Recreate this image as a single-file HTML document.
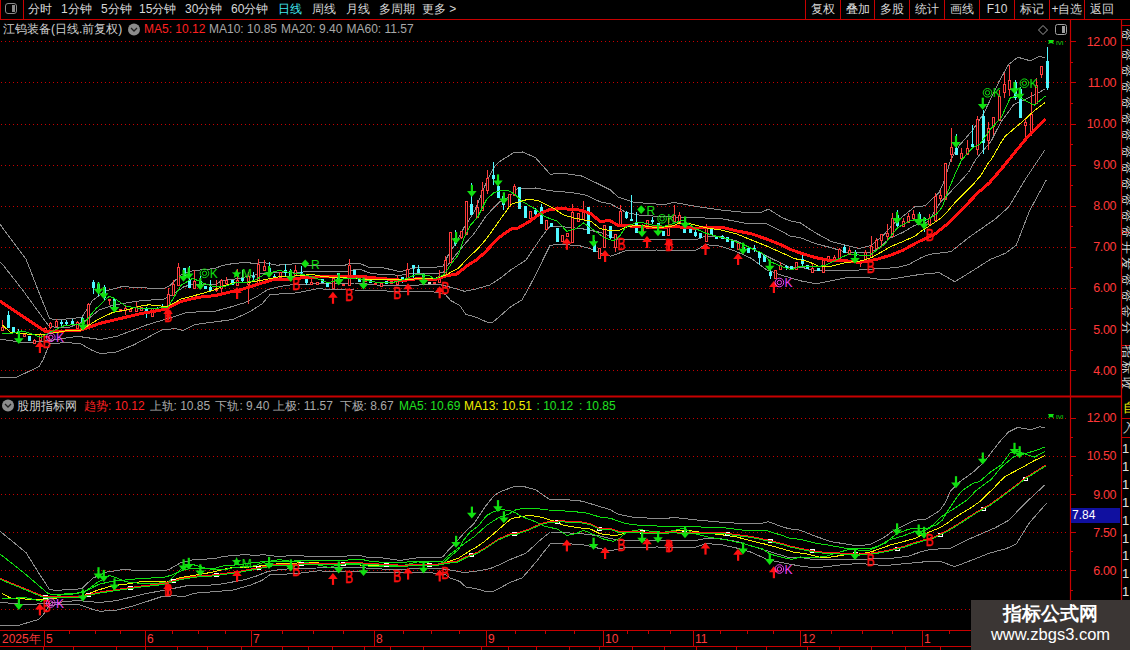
<!DOCTYPE html>
<html><head><meta charset="utf-8"><style>
html,body{margin:0;padding:0;background:#000;width:1130px;height:650px;overflow:hidden;position:relative}
.t{position:absolute;white-space:nowrap;font-family:"Liberation Sans",sans-serif;line-height:15px;font-size:12px}
</style></head><body>
<svg width="1130" height="650" style="position:absolute;left:0;top:0"><line x1="0" y1="19.5" x2="1130" y2="19.5" stroke="#c80000" stroke-width="1"/><line x1="0.5" y1="0" x2="0.5" y2="19" stroke="#c80000"/><line x1="23.5" y1="0" x2="23.5" y2="19" stroke="#c80000"/><line x1="805.5" y1="0" x2="805.5" y2="19" stroke="#c80000"/><line x1="840.5" y1="0" x2="840.5" y2="19" stroke="#c80000"/><line x1="874.5" y1="0" x2="874.5" y2="19" stroke="#c80000"/><line x1="909.5" y1="0" x2="909.5" y2="19" stroke="#c80000"/><line x1="944.5" y1="0" x2="944.5" y2="19" stroke="#c80000"/><line x1="979.5" y1="0" x2="979.5" y2="19" stroke="#c80000"/><line x1="1014.5" y1="0" x2="1014.5" y2="19" stroke="#c80000"/><line x1="1049.5" y1="0" x2="1049.5" y2="19" stroke="#c80000"/><line x1="1084.5" y1="0" x2="1084.5" y2="19" stroke="#c80000"/><rect x="5.5" y="3.5" width="11" height="10" rx="2.5" fill="none" stroke="#8a8a8a" stroke-width="1"/><rect x="12" y="5" width="3" height="7" fill="#8a8a8a"/><line x1="1070.5" y1="19" x2="1070.5" y2="630" stroke="#c80000" stroke-width="1.2"/><line x1="1121.5" y1="19" x2="1121.5" y2="650" stroke="#c80000" stroke-width="1.2"/><line x1="0" y1="396.5" x2="1122" y2="396.5" stroke="#c80000" stroke-width="2"/><line x1="0" y1="630.5" x2="1130" y2="630.5" stroke="#c80000" stroke-width="1.2"/><line x1="0" y1="646.5" x2="1130" y2="646.5" stroke="#c80000" stroke-width="1.2"/><line x1="1" y1="41.5" x2="1068" y2="41.5" stroke="#c80000" stroke-dasharray="1 3"/><line x1="1070" y1="41.5" x2="1076" y2="41.5" stroke="#c80000"/><line x1="1070" y1="62.5" x2="1073" y2="62.5" stroke="#c80000"/><line x1="1" y1="82.5" x2="1068" y2="82.5" stroke="#c80000" stroke-dasharray="1 3"/><line x1="1070" y1="82.5" x2="1076" y2="82.5" stroke="#c80000"/><line x1="1070" y1="103.5" x2="1073" y2="103.5" stroke="#c80000"/><line x1="1" y1="124.5" x2="1068" y2="124.5" stroke="#c80000" stroke-dasharray="1 3"/><line x1="1070" y1="124.5" x2="1076" y2="124.5" stroke="#c80000"/><line x1="1070" y1="144.5" x2="1073" y2="144.5" stroke="#c80000"/><line x1="1" y1="165.5" x2="1068" y2="165.5" stroke="#c80000" stroke-dasharray="1 3"/><line x1="1070" y1="165.5" x2="1076" y2="165.5" stroke="#c80000"/><line x1="1070" y1="185.5" x2="1073" y2="185.5" stroke="#c80000"/><line x1="1" y1="206.5" x2="1068" y2="206.5" stroke="#c80000" stroke-dasharray="1 3"/><line x1="1070" y1="206.5" x2="1076" y2="206.5" stroke="#c80000"/><line x1="1070" y1="226.5" x2="1073" y2="226.5" stroke="#c80000"/><line x1="1" y1="247.5" x2="1068" y2="247.5" stroke="#c80000" stroke-dasharray="1 3"/><line x1="1070" y1="247.5" x2="1076" y2="247.5" stroke="#c80000"/><line x1="1070" y1="267.5" x2="1073" y2="267.5" stroke="#c80000"/><line x1="1" y1="288.5" x2="1068" y2="288.5" stroke="#c80000" stroke-dasharray="1 3"/><line x1="1070" y1="288.5" x2="1076" y2="288.5" stroke="#c80000"/><line x1="1070" y1="308.5" x2="1073" y2="308.5" stroke="#c80000"/><line x1="1" y1="329.5" x2="1068" y2="329.5" stroke="#c80000" stroke-dasharray="1 3"/><line x1="1070" y1="329.5" x2="1076" y2="329.5" stroke="#c80000"/><line x1="1070" y1="350.5" x2="1073" y2="350.5" stroke="#c80000"/><line x1="1" y1="370.5" x2="1068" y2="370.5" stroke="#c80000" stroke-dasharray="1 3"/><line x1="1070" y1="370.5" x2="1076" y2="370.5" stroke="#c80000"/><line x1="1" y1="418.5" x2="1068" y2="418.5" stroke="#c80000" stroke-dasharray="1 3"/><line x1="1070" y1="418.5" x2="1076" y2="418.5" stroke="#c80000"/><line x1="1070" y1="437.5" x2="1073" y2="437.5" stroke="#c80000"/><line x1="1" y1="456.5" x2="1068" y2="456.5" stroke="#c80000" stroke-dasharray="1 3"/><line x1="1070" y1="456.5" x2="1076" y2="456.5" stroke="#c80000"/><line x1="1070" y1="475.5" x2="1073" y2="475.5" stroke="#c80000"/><line x1="1" y1="494.5" x2="1068" y2="494.5" stroke="#c80000" stroke-dasharray="1 3"/><line x1="1070" y1="494.5" x2="1076" y2="494.5" stroke="#c80000"/><line x1="1070" y1="513.5" x2="1073" y2="513.5" stroke="#c80000"/><line x1="1" y1="532.5" x2="1068" y2="532.5" stroke="#c80000" stroke-dasharray="1 3"/><line x1="1070" y1="532.5" x2="1076" y2="532.5" stroke="#c80000"/><line x1="1070" y1="551.5" x2="1073" y2="551.5" stroke="#c80000"/><line x1="1" y1="570.5" x2="1068" y2="570.5" stroke="#c80000" stroke-dasharray="1 3"/><line x1="1070" y1="570.5" x2="1076" y2="570.5" stroke="#c80000"/><line x1="1070" y1="590.5" x2="1073" y2="590.5" stroke="#c80000"/><line x1="1" y1="609.5" x2="1068" y2="609.5" stroke="#c80000" stroke-dasharray="1 3"/><line x1="1070" y1="609.5" x2="1076" y2="609.5" stroke="#c80000"/><line x1="1070" y1="628.5" x2="1073" y2="628.5" stroke="#c80000"/><line x1="44.5" y1="630" x2="44.5" y2="646" stroke="#c80000"/><line x1="145.5" y1="630" x2="145.5" y2="646" stroke="#c80000"/><line x1="251.5" y1="630" x2="251.5" y2="646" stroke="#c80000"/><line x1="374.5" y1="630" x2="374.5" y2="646" stroke="#c80000"/><line x1="486.5" y1="630" x2="486.5" y2="646" stroke="#c80000"/><line x1="603.5" y1="630" x2="603.5" y2="646" stroke="#c80000"/><line x1="693.5" y1="630" x2="693.5" y2="646" stroke="#c80000"/><line x1="800.5" y1="630" x2="800.5" y2="646" stroke="#c80000"/><line x1="922.5" y1="630" x2="922.5" y2="646" stroke="#c80000"/><line x1="69.5" y1="630" x2="69.5" y2="634" stroke="#c80000"/><line x1="95.5" y1="630" x2="95.5" y2="634" stroke="#c80000"/><line x1="120.5" y1="630" x2="120.5" y2="634" stroke="#c80000"/><line x1="172.5" y1="630" x2="172.5" y2="634" stroke="#c80000"/><line x1="198.5" y1="630" x2="198.5" y2="634" stroke="#c80000"/><line x1="225.5" y1="630" x2="225.5" y2="634" stroke="#c80000"/><line x1="282.5" y1="630" x2="282.5" y2="634" stroke="#c80000"/><line x1="313.5" y1="630" x2="313.5" y2="634" stroke="#c80000"/><line x1="343.5" y1="630" x2="343.5" y2="634" stroke="#c80000"/><line x1="403.5" y1="630" x2="403.5" y2="634" stroke="#c80000"/><line x1="431.5" y1="630" x2="431.5" y2="634" stroke="#c80000"/><line x1="459.5" y1="630" x2="459.5" y2="634" stroke="#c80000"/><line x1="515.5" y1="630" x2="515.5" y2="634" stroke="#c80000"/><line x1="545.5" y1="630" x2="545.5" y2="634" stroke="#c80000"/><line x1="574.5" y1="630" x2="574.5" y2="634" stroke="#c80000"/><line x1="627.5" y1="630" x2="627.5" y2="634" stroke="#c80000"/><line x1="648.5" y1="630" x2="648.5" y2="634" stroke="#c80000"/><line x1="670.5" y1="630" x2="670.5" y2="634" stroke="#c80000"/><line x1="720.5" y1="630" x2="720.5" y2="634" stroke="#c80000"/><line x1="747.5" y1="630" x2="747.5" y2="634" stroke="#c80000"/><line x1="773.5" y1="630" x2="773.5" y2="634" stroke="#c80000"/><line x1="831.5" y1="630" x2="831.5" y2="634" stroke="#c80000"/><line x1="862.5" y1="630" x2="862.5" y2="634" stroke="#c80000"/><line x1="892.5" y1="630" x2="892.5" y2="634" stroke="#c80000"/><line x1="949.5" y1="630" x2="949.5" y2="634" stroke="#c80000"/><line x1="980.5" y1="630" x2="980.5" y2="634" stroke="#c80000"/><line x1="1010.5" y1="630" x2="1010.5" y2="634" stroke="#c80000"/><line x1="1040.5" y1="630" x2="1040.5" y2="634" stroke="#c80000"/><line x1="43.5" y1="647" x2="43.5" y2="650" stroke="#c80000"/><line x1="73.5" y1="647" x2="73.5" y2="650" stroke="#c80000"/><line x1="116.5" y1="647" x2="116.5" y2="650" stroke="#c80000"/><line x1="145.5" y1="647" x2="145.5" y2="650" stroke="#c80000"/><line x1="177.5" y1="647" x2="177.5" y2="650" stroke="#c80000"/><line x1="207.5" y1="647" x2="207.5" y2="650" stroke="#c80000"/><line x1="241.5" y1="647" x2="241.5" y2="650" stroke="#c80000"/><line x1="282.5" y1="647" x2="282.5" y2="650" stroke="#c80000"/><line x1="308.5" y1="647" x2="308.5" y2="650" stroke="#c80000"/><line x1="332.5" y1="647" x2="332.5" y2="650" stroke="#c80000"/><line x1="364.5" y1="647" x2="364.5" y2="650" stroke="#c80000"/><line x1="390.5" y1="647" x2="390.5" y2="650" stroke="#c80000"/><line x1="423.5" y1="647" x2="423.5" y2="650" stroke="#c80000"/><line x1="481.5" y1="647" x2="481.5" y2="650" stroke="#c80000"/><line x1="508.5" y1="647" x2="508.5" y2="650" stroke="#c80000"/><line x1="536.5" y1="647" x2="536.5" y2="650" stroke="#c80000"/><line x1="569.5" y1="647" x2="569.5" y2="650" stroke="#c80000"/><line x1="599.5" y1="647" x2="599.5" y2="650" stroke="#c80000"/><line x1="632.5" y1="647" x2="632.5" y2="650" stroke="#c80000"/><line x1="664.5" y1="647" x2="664.5" y2="650" stroke="#c80000"/><line x1="696.5" y1="647" x2="696.5" y2="650" stroke="#c80000"/><line x1="736.5" y1="647" x2="736.5" y2="650" stroke="#c80000"/><line x1="766.5" y1="647" x2="766.5" y2="650" stroke="#c80000"/><line x1="807.5" y1="647" x2="807.5" y2="650" stroke="#c80000"/><line x1="839.5" y1="647" x2="839.5" y2="650" stroke="#c80000"/><line x1="871.5" y1="647" x2="871.5" y2="650" stroke="#c80000"/><line x1="905.5" y1="647" x2="905.5" y2="650" stroke="#c80000"/><line x1="940.5" y1="647" x2="940.5" y2="650" stroke="#c80000"/><line x1="1121" y1="25.5" x2="1130" y2="25.5" stroke="#c80000"/><line x1="1121" y1="45.5" x2="1130" y2="45.5" stroke="#c80000"/><line x1="1121" y1="232.5" x2="1130" y2="232.5" stroke="#c80000"/><line x1="1121" y1="345.5" x2="1130" y2="345.5" stroke="#c80000"/><line x1="1121" y1="418.5" x2="1130" y2="418.5" stroke="#c80000"/><line x1="1121" y1="437.5" x2="1130" y2="437.5" stroke="#c80000"/><circle cx="134" cy="29.5" r="6" fill="#8c8c8c"/><polyline points="131,28 134,31 137,28" fill="none" stroke="#202020" stroke-width="1.3"/><circle cx="8" cy="405.5" r="6" fill="#8c8c8c"/><polyline points="5,404 8,407 11,404" fill="none" stroke="#202020" stroke-width="1.3"/><polygon points="1043,25.5 1047.5,30 1043,34.5 1038.5,30" fill="none" stroke="#a0a0a0"/><rect x="1055.5" y="24.5" width="11" height="10" rx="2" fill="none" stroke="#a0a0a0"/><rect x="1062" y="26" width="3" height="7" fill="#a0a0a0"/><clipPath id="cu"><rect x="0" y="36" width="1069" height="360"/></clipPath><g clip-path="url(#cu)"><polyline points="0.0,224.0 2.6,228.0 26.0,259.0 38.0,290.0 49.5,318.5 56.0,320.0 81.8,317.4 92.3,300.8 105.4,290.8 117.0,288.0 122.3,286.5 135.0,287.5 163.9,288.7 169.6,285.8 181.2,274.8 192.7,270.8 215.0,268.5 221.5,265.8 233.0,263.5 248.0,262.3 253.9,264.0 263.0,262.3 277.0,265.2 298.9,263.5 308.0,265.2 345.0,265.2 349.7,263.5 360.0,263.5 368.0,267.0 383.0,267.7 400.4,271.8 410.8,268.9 417.7,267.5 435.0,267.4 442.9,266.0 448.0,255.6 454.6,245.0 463.8,228.0 474.3,211.7 485.4,184.6 494.0,167.4 498.5,162.2 513.2,153.0 522.5,152.0 535.4,157.5 550.2,174.2 563.0,173.2 581.5,176.0 595.0,182.3 610.4,190.0 618.0,197.0 633.5,202.3 664.2,204.6 673.5,202.3 695.0,206.2 720.8,210.0 743.8,212.3 759.2,213.0 768.5,209.2 782.3,217.7 790.0,220.8 800.4,223.0 815.8,233.0 831.2,241.5 846.5,245.4 858.8,248.5 871.2,245.4 884.2,234.4 892.8,224.5 902.6,216.5 914.9,206.7 920.0,206.4 925.5,205.7 933.9,197.4 939.4,191.9 945.0,179.4 950.5,160.0 959.6,145.1 972.5,130.3 983.6,113.7 999.2,81.2 1008.5,64.6 1017.7,57.2 1030.6,60.9 1039.9,56.2 1045.4,58.1" fill="none" stroke="#8c8c8c" stroke-width="1" shape-rendering="crispEdges"/><polyline points="0.0,262.0 2.6,264.5 22.6,290.0 48.4,325.5 53.8,327.0 70.0,327.0 87.0,320.0 99.0,310.0 112.3,305.4 126.0,303.0 140.0,300.8 163.9,299.0 173.0,294.5 183.5,287.0 192.7,284.0 215.0,284.6 221.5,280.8 238.9,278.5 251.6,275.6 267.7,272.7 290.0,273.0 308.0,271.6 345.0,271.6 354.3,269.8 360.0,269.4 371.5,273.5 383.0,274.6 400.4,275.2 412.0,273.5 435.0,273.9 442.9,272.6 448.0,264.7 457.3,253.0 465.0,243.8 474.3,233.3 486.6,215.3 498.9,202.4 508.7,197.0 517.0,189.0 535.4,188.0 550.2,190.8 572.3,192.6 587.0,195.4 600.0,201.8 610.4,203.8 625.8,212.3 641.2,215.4 671.9,217.0 695.0,217.7 720.8,218.5 743.8,223.0 766.9,223.8 782.3,231.5 790.0,236.2 800.4,237.7 815.8,243.8 831.2,247.7 846.5,252.3 858.8,253.0 871.2,252.0 878.0,248.5 890.3,238.0 902.6,232.5 914.9,225.1 924.7,223.9 930.0,219.0 940.8,201.6 954.6,187.7 968.5,172.5 975.4,160.0 979.9,154.3 991.0,141.4 1001.0,121.8 1014.0,104.3 1027.0,98.7 1038.0,93.2 1045.4,88.6" fill="none" stroke="#8c8c8c" stroke-width="1" shape-rendering="crispEdges"/><polyline points="0.0,339.0 2.6,339.5 26.0,343.0 49.5,340.6 77.5,336.3 100.0,339.5 117.0,336.3 146.5,325.0 169.6,318.0 187.0,312.4 215.0,311.2 227.3,308.0 244.6,302.7 256.2,297.0 267.7,289.5 279.3,286.6 290.0,285.0 308.0,284.3 331.2,283.0 354.3,283.0 360.0,283.3 383.0,285.6 406.2,285.6 429.3,284.5 441.5,285.0 450.7,287.3 464.5,291.3 476.0,289.0 489.8,285.0 501.3,277.5 510.6,270.0 526.0,260.0 541.0,237.8 550.2,225.8 563.0,226.8 581.5,228.6 600.0,232.3 618.0,239.2 671.9,239.2 695.0,240.0 705.4,236.2 720.8,237.0 736.2,240.8 751.5,248.5 766.9,256.2 782.3,263.8 790.0,267.7 800.4,267.0 815.8,270.8 846.5,270.8 871.2,269.2 896.5,267.6 908.8,264.5 921.0,257.7 930.0,254.2 951.0,251.6 969.2,237.2 995.4,218.9 1008.5,207.2 1026.8,177.0 1045.1,149.6" fill="none" stroke="#8c8c8c" stroke-width="1" shape-rendering="crispEdges"/><polyline points="0.0,377.0 17.0,377.0 39.0,366.6 43.0,360.0 49.5,343.8 64.6,342.7 79.7,343.3 91.5,350.0 100.0,353.5 115.3,352.4 134.0,344.8 162.7,329.5 176.2,328.7 183.0,330.4 195.0,324.5 233.0,319.5 250.4,311.4 262.0,303.9 270.0,294.7 279.3,294.0 296.5,292.9 319.6,288.3 325.4,289.5 354.3,290.0 377.3,290.8 406.2,291.4 430.0,291.3 445.0,294.2 450.7,300.5 460.0,305.7 465.7,314.3 476.0,317.2 487.5,322.4 492.7,322.4 510.6,306.8 522.0,300.0 529.0,287.3 538.2,270.0 542.8,260.0 550.2,245.2 563.0,244.3 581.5,246.1 590.8,249.0 600.0,252.6 610.4,256.2 625.8,250.8 656.5,250.0 695.0,250.8 705.4,244.6 720.8,246.2 736.2,251.5 751.5,258.5 766.9,270.0 782.3,275.4 800.4,280.8 815.8,283.8 831.2,280.8 846.5,277.7 861.9,277.0 885.0,280.0 921.0,274.3 939.2,272.6 954.8,281.7 971.9,271.2 990.2,259.5 1005.9,253.0 1016.3,245.1 1029.4,211.1 1046.4,179.7" fill="none" stroke="#8c8c8c" stroke-width="1" shape-rendering="crispEdges"/><line x1="2.5" y1="320" x2="2.5" y2="327" stroke="#ff3c3c"/><line x1="2.5" y1="330" x2="2.5" y2="330" stroke="#ff3c3c"/><rect x="1.5" y="327.5" width="2" height="3" fill="#000" stroke="#ff3c3c" stroke-width="1"/><line x1="8.5" y1="311" x2="8.5" y2="328" stroke="#50f8ff"/><rect x="7" y="315" width="3" height="13" fill="#50f8ff"/><line x1="13.5" y1="327" x2="13.5" y2="332" stroke="#50f8ff"/><rect x="12" y="327" width="3" height="5" fill="#50f8ff"/><line x1="18.5" y1="329" x2="18.5" y2="334" stroke="#50f8ff"/><rect x="17" y="331" width="3" height="2" fill="#50f8ff"/><line x1="24.5" y1="333" x2="24.5" y2="334" stroke="#ff3c3c"/><line x1="24.5" y1="336" x2="24.5" y2="336" stroke="#ff3c3c"/><rect x="23.5" y="334.5" width="2" height="2" fill="#000" stroke="#ff3c3c" stroke-width="1"/><line x1="29.5" y1="336" x2="29.5" y2="341" stroke="#50f8ff"/><rect x="28" y="336" width="3" height="5" fill="#50f8ff"/><line x1="34.5" y1="339" x2="34.5" y2="340" stroke="#ff3c3c"/><line x1="34.5" y1="343" x2="34.5" y2="344" stroke="#ff3c3c"/><rect x="33.5" y="340.5" width="2" height="3" fill="#000" stroke="#ff3c3c" stroke-width="1"/><line x1="40.5" y1="333" x2="40.5" y2="334" stroke="#ff3c3c"/><line x1="40.5" y1="340" x2="40.5" y2="340" stroke="#ff3c3c"/><rect x="39.5" y="334.5" width="2" height="6" fill="#000" stroke="#ff3c3c" stroke-width="1"/><line x1="45.5" y1="327" x2="45.5" y2="328" stroke="#ff3c3c"/><line x1="45.5" y1="332" x2="45.5" y2="332" stroke="#ff3c3c"/><rect x="44.5" y="328.5" width="2" height="4" fill="#000" stroke="#ff3c3c" stroke-width="1"/><line x1="50.5" y1="322" x2="50.5" y2="323" stroke="#ff3c3c"/><line x1="50.5" y1="327" x2="50.5" y2="329" stroke="#ff3c3c"/><rect x="49.5" y="323.5" width="2" height="4" fill="#000" stroke="#ff3c3c" stroke-width="1"/><line x1="56.5" y1="319" x2="56.5" y2="321" stroke="#ff3c3c"/><line x1="56.5" y1="326" x2="56.5" y2="326" stroke="#ff3c3c"/><rect x="55.5" y="321.5" width="2" height="5" fill="#000" stroke="#ff3c3c" stroke-width="1"/><line x1="61.5" y1="320" x2="61.5" y2="326" stroke="#50f8ff"/><rect x="60" y="322" width="3" height="2" fill="#50f8ff"/><line x1="66.5" y1="320" x2="66.5" y2="326" stroke="#50f8ff"/><rect x="65" y="322" width="3" height="2" fill="#50f8ff"/><line x1="72.5" y1="319" x2="72.5" y2="325" stroke="#50f8ff"/><rect x="71" y="321" width="3" height="3" fill="#50f8ff"/><line x1="77.5" y1="321" x2="77.5" y2="322" stroke="#ff3c3c"/><line x1="77.5" y1="328" x2="77.5" y2="328" stroke="#ff3c3c"/><rect x="76.5" y="322.5" width="2" height="6" fill="#000" stroke="#ff3c3c" stroke-width="1"/><line x1="82.5" y1="317" x2="82.5" y2="323" stroke="#50f8ff"/><rect x="81" y="318" width="3" height="4" fill="#50f8ff"/><line x1="88.5" y1="303" x2="88.5" y2="304" stroke="#ff3c3c"/><line x1="88.5" y1="324" x2="88.5" y2="325" stroke="#ff3c3c"/><rect x="87.5" y="304.5" width="2" height="20" fill="#000" stroke="#ff3c3c" stroke-width="1"/><line x1="93.5" y1="280" x2="93.5" y2="294" stroke="#50f8ff"/><rect x="92" y="282" width="3" height="6" fill="#50f8ff"/><line x1="98.5" y1="282" x2="98.5" y2="296" stroke="#50f8ff"/><rect x="97" y="284" width="3" height="8" fill="#50f8ff"/><line x1="104.5" y1="285" x2="104.5" y2="301" stroke="#50f8ff"/><rect x="103" y="287" width="3" height="11" fill="#50f8ff"/><line x1="109.5" y1="299" x2="109.5" y2="299" stroke="#ff3c3c"/><line x1="109.5" y1="300" x2="109.5" y2="305" stroke="#ff3c3c"/><rect x="108.5" y="299.5" width="2" height="1" fill="#000" stroke="#ff3c3c" stroke-width="1"/><line x1="114.5" y1="299" x2="114.5" y2="307" stroke="#50f8ff"/><rect x="113" y="299" width="3" height="8" fill="#50f8ff"/><line x1="120.5" y1="309" x2="120.5" y2="309" stroke="#ff3c3c"/><line x1="120.5" y1="311" x2="120.5" y2="311" stroke="#ff3c3c"/><rect x="119.5" y="309.5" width="2" height="2" fill="#000" stroke="#ff3c3c" stroke-width="1"/><line x1="125.5" y1="306" x2="125.5" y2="308" stroke="#ff3c3c"/><line x1="125.5" y1="310" x2="125.5" y2="315" stroke="#ff3c3c"/><rect x="124.5" y="308.5" width="2" height="2" fill="#000" stroke="#ff3c3c" stroke-width="1"/><line x1="130.5" y1="309" x2="130.5" y2="309" stroke="#ff3c3c"/><line x1="130.5" y1="311" x2="130.5" y2="311" stroke="#ff3c3c"/><rect x="129.5" y="309.5" width="2" height="2" fill="#000" stroke="#ff3c3c" stroke-width="1"/><line x1="136.5" y1="302" x2="136.5" y2="307" stroke="#ff3c3c"/><line x1="136.5" y1="311" x2="136.5" y2="311" stroke="#ff3c3c"/><rect x="135.5" y="307.5" width="2" height="4" fill="#000" stroke="#ff3c3c" stroke-width="1"/><line x1="141.5" y1="307" x2="141.5" y2="307" stroke="#ff3c3c"/><line x1="141.5" y1="310" x2="141.5" y2="310" stroke="#ff3c3c"/><rect x="140.5" y="307.5" width="2" height="3" fill="#000" stroke="#ff3c3c" stroke-width="1"/><line x1="146.5" y1="307" x2="146.5" y2="318" stroke="#50f8ff"/><rect x="145" y="308" width="3" height="4" fill="#50f8ff"/><line x1="152.5" y1="308" x2="152.5" y2="308" stroke="#ff3c3c"/><line x1="152.5" y1="316" x2="152.5" y2="316" stroke="#ff3c3c"/><rect x="151.5" y="308.5" width="2" height="8" fill="#000" stroke="#ff3c3c" stroke-width="1"/><line x1="157.5" y1="307" x2="157.5" y2="312" stroke="#50f8ff"/><rect x="156" y="308" width="3" height="3" fill="#50f8ff"/><line x1="162.5" y1="304" x2="162.5" y2="311" stroke="#50f8ff"/><rect x="161" y="307" width="3" height="4" fill="#50f8ff"/><line x1="168.5" y1="288" x2="168.5" y2="294" stroke="#ff3c3c"/><line x1="168.5" y1="307" x2="168.5" y2="307" stroke="#ff3c3c"/><rect x="167.5" y="294.5" width="2" height="13" fill="#000" stroke="#ff3c3c" stroke-width="1"/><line x1="173.5" y1="280" x2="173.5" y2="284" stroke="#ff3c3c"/><line x1="173.5" y1="295" x2="173.5" y2="295" stroke="#ff3c3c"/><rect x="172.5" y="284.5" width="2" height="11" fill="#000" stroke="#ff3c3c" stroke-width="1"/><line x1="178.5" y1="263" x2="178.5" y2="267" stroke="#ff3c3c"/><line x1="178.5" y1="285" x2="178.5" y2="285" stroke="#ff3c3c"/><rect x="177.5" y="267.5" width="2" height="18" fill="#000" stroke="#ff3c3c" stroke-width="1"/><line x1="184.5" y1="268" x2="184.5" y2="277" stroke="#50f8ff"/><rect x="183" y="268" width="3" height="8" fill="#50f8ff"/><line x1="189.5" y1="266" x2="189.5" y2="288" stroke="#50f8ff"/><rect x="188" y="280" width="3" height="8" fill="#50f8ff"/><line x1="194.5" y1="270" x2="194.5" y2="281" stroke="#ff3c3c"/><line x1="194.5" y1="288" x2="194.5" y2="288" stroke="#ff3c3c"/><rect x="193.5" y="281.5" width="2" height="7" fill="#000" stroke="#ff3c3c" stroke-width="1"/><line x1="200.5" y1="276" x2="200.5" y2="288" stroke="#50f8ff"/><rect x="199" y="281" width="3" height="5" fill="#50f8ff"/><line x1="205.5" y1="286" x2="205.5" y2="289" stroke="#50f8ff"/><rect x="204" y="286" width="3" height="3" fill="#50f8ff"/><line x1="210.5" y1="280" x2="210.5" y2="291" stroke="#50f8ff"/><rect x="209" y="287" width="3" height="4" fill="#50f8ff"/><line x1="216.5" y1="280" x2="216.5" y2="288" stroke="#ff3c3c"/><line x1="216.5" y1="290" x2="216.5" y2="292" stroke="#ff3c3c"/><rect x="215.5" y="288.5" width="2" height="2" fill="#000" stroke="#ff3c3c" stroke-width="1"/><line x1="221.5" y1="279" x2="221.5" y2="280" stroke="#ff3c3c"/><line x1="221.5" y1="288" x2="221.5" y2="292" stroke="#ff3c3c"/><rect x="220.5" y="280.5" width="2" height="8" fill="#000" stroke="#ff3c3c" stroke-width="1"/><line x1="226.5" y1="277" x2="226.5" y2="280" stroke="#ff3c3c"/><line x1="226.5" y1="283" x2="226.5" y2="285" stroke="#ff3c3c"/><rect x="225.5" y="280.5" width="2" height="3" fill="#000" stroke="#ff3c3c" stroke-width="1"/><line x1="232.5" y1="280" x2="232.5" y2="285" stroke="#50f8ff"/><rect x="231" y="280" width="3" height="5" fill="#50f8ff"/><line x1="237.5" y1="269" x2="237.5" y2="280" stroke="#ff3c3c"/><line x1="237.5" y1="285" x2="237.5" y2="285" stroke="#ff3c3c"/><rect x="236.5" y="280.5" width="2" height="5" fill="#000" stroke="#ff3c3c" stroke-width="1"/><line x1="242.5" y1="270" x2="242.5" y2="282" stroke="#50f8ff"/><rect x="241" y="278" width="3" height="3" fill="#50f8ff"/><line x1="248.5" y1="272" x2="248.5" y2="276" stroke="#ff3c3c"/><line x1="248.5" y1="284" x2="248.5" y2="304" stroke="#ff3c3c"/><rect x="247.5" y="276.5" width="2" height="8" fill="#000" stroke="#ff3c3c" stroke-width="1"/><line x1="253.5" y1="272" x2="253.5" y2="281" stroke="#50f8ff"/><rect x="252" y="276" width="3" height="1.5" fill="#50f8ff"/><line x1="258.5" y1="259" x2="258.5" y2="264" stroke="#ff3c3c"/><line x1="258.5" y1="283" x2="258.5" y2="283" stroke="#ff3c3c"/><rect x="257.5" y="264.5" width="2" height="19" fill="#000" stroke="#ff3c3c" stroke-width="1"/><line x1="264.5" y1="260" x2="264.5" y2="266" stroke="#ff3c3c"/><line x1="264.5" y1="270" x2="264.5" y2="270" stroke="#ff3c3c"/><rect x="263.5" y="266.5" width="2" height="4" fill="#000" stroke="#ff3c3c" stroke-width="1"/><line x1="269.5" y1="262" x2="269.5" y2="276" stroke="#50f8ff"/><rect x="268" y="268" width="3" height="7" fill="#50f8ff"/><line x1="274.5" y1="274" x2="274.5" y2="278" stroke="#50f8ff"/><rect x="273" y="276" width="3" height="1.5" fill="#50f8ff"/><line x1="280.5" y1="272" x2="280.5" y2="272" stroke="#ff3c3c"/><line x1="280.5" y1="277" x2="280.5" y2="277" stroke="#ff3c3c"/><rect x="279.5" y="272.5" width="2" height="5" fill="#000" stroke="#ff3c3c" stroke-width="1"/><line x1="285.5" y1="264" x2="285.5" y2="276" stroke="#50f8ff"/><rect x="284" y="270" width="3" height="3" fill="#50f8ff"/><line x1="290.5" y1="269" x2="290.5" y2="277" stroke="#50f8ff"/><rect x="289" y="271" width="3" height="5" fill="#50f8ff"/><line x1="295.5" y1="265" x2="295.5" y2="270" stroke="#ff3c3c"/><line x1="295.5" y1="275" x2="295.5" y2="275" stroke="#ff3c3c"/><rect x="294.5" y="270.5" width="2" height="5" fill="#000" stroke="#ff3c3c" stroke-width="1"/><line x1="301.5" y1="266" x2="301.5" y2="274" stroke="#50f8ff"/><rect x="300" y="272" width="3" height="1.5" fill="#50f8ff"/><line x1="306.5" y1="275" x2="306.5" y2="285" stroke="#50f8ff"/><rect x="305" y="276" width="3" height="7" fill="#50f8ff"/><line x1="311.5" y1="278" x2="311.5" y2="282" stroke="#ff3c3c"/><line x1="311.5" y1="284" x2="311.5" y2="284" stroke="#ff3c3c"/><rect x="310.5" y="282.5" width="2" height="2" fill="#000" stroke="#ff3c3c" stroke-width="1"/><line x1="317.5" y1="282" x2="317.5" y2="282" stroke="#ff3c3c"/><line x1="317.5" y1="284" x2="317.5" y2="284" stroke="#ff3c3c"/><rect x="316.5" y="282.5" width="2" height="2" fill="#000" stroke="#ff3c3c" stroke-width="1"/><line x1="322.5" y1="279" x2="322.5" y2="283" stroke="#50f8ff"/><rect x="321" y="279" width="3" height="4" fill="#50f8ff"/><line x1="327.5" y1="283" x2="327.5" y2="287" stroke="#50f8ff"/><rect x="326" y="283" width="3" height="4" fill="#50f8ff"/><line x1="333.5" y1="278" x2="333.5" y2="278" stroke="#ff3c3c"/><line x1="333.5" y1="288" x2="333.5" y2="288" stroke="#ff3c3c"/><rect x="332.5" y="278.5" width="2" height="10" fill="#000" stroke="#ff3c3c" stroke-width="1"/><line x1="338.5" y1="273" x2="338.5" y2="280" stroke="#50f8ff"/><rect x="337" y="273" width="3" height="7" fill="#50f8ff"/><line x1="343.5" y1="284" x2="343.5" y2="284" stroke="#ff3c3c"/><line x1="343.5" y1="285" x2="343.5" y2="285" stroke="#ff3c3c"/><rect x="342.5" y="284.5" width="2" height="1" fill="#000" stroke="#ff3c3c" stroke-width="1"/><line x1="349.5" y1="259" x2="349.5" y2="265" stroke="#ff3c3c"/><line x1="349.5" y1="285" x2="349.5" y2="285" stroke="#ff3c3c"/><rect x="348.5" y="265.5" width="2" height="20" fill="#000" stroke="#ff3c3c" stroke-width="1"/><line x1="354.5" y1="270" x2="354.5" y2="277" stroke="#50f8ff"/><rect x="353" y="270" width="3" height="7" fill="#50f8ff"/><line x1="359.5" y1="278" x2="359.5" y2="282" stroke="#50f8ff"/><rect x="358" y="278" width="3" height="4" fill="#50f8ff"/><line x1="365.5" y1="276" x2="365.5" y2="278" stroke="#ff3c3c"/><line x1="365.5" y1="281" x2="365.5" y2="282" stroke="#ff3c3c"/><rect x="364.5" y="278.5" width="2" height="3" fill="#000" stroke="#ff3c3c" stroke-width="1"/><line x1="370.5" y1="280" x2="370.5" y2="283" stroke="#50f8ff"/><rect x="369" y="280" width="3" height="3" fill="#50f8ff"/><line x1="375.5" y1="283" x2="375.5" y2="283" stroke="#ff3c3c"/><line x1="375.5" y1="284" x2="375.5" y2="284" stroke="#ff3c3c"/><rect x="374.5" y="283.5" width="2" height="1" fill="#000" stroke="#ff3c3c" stroke-width="1"/><line x1="381.5" y1="283" x2="381.5" y2="283" stroke="#ff3c3c"/><line x1="381.5" y1="286" x2="381.5" y2="286" stroke="#ff3c3c"/><rect x="380.5" y="283.5" width="2" height="3" fill="#000" stroke="#ff3c3c" stroke-width="1"/><line x1="386.5" y1="281" x2="386.5" y2="284" stroke="#50f8ff"/><rect x="385" y="281" width="3" height="3" fill="#50f8ff"/><line x1="391.5" y1="281" x2="391.5" y2="281" stroke="#ff3c3c"/><line x1="391.5" y1="283" x2="391.5" y2="283" stroke="#ff3c3c"/><rect x="390.5" y="281.5" width="2" height="2" fill="#000" stroke="#ff3c3c" stroke-width="1"/><line x1="397.5" y1="275" x2="397.5" y2="278" stroke="#ff3c3c"/><line x1="397.5" y1="284" x2="397.5" y2="284" stroke="#ff3c3c"/><rect x="396.5" y="278.5" width="2" height="6" fill="#000" stroke="#ff3c3c" stroke-width="1"/><line x1="402.5" y1="277" x2="402.5" y2="283" stroke="#50f8ff"/><rect x="401" y="277" width="3" height="2" fill="#50f8ff"/><line x1="407.5" y1="263" x2="407.5" y2="269" stroke="#ff3c3c"/><line x1="407.5" y1="279" x2="407.5" y2="279" stroke="#ff3c3c"/><rect x="406.5" y="269.5" width="2" height="10" fill="#000" stroke="#ff3c3c" stroke-width="1"/><line x1="413.5" y1="265" x2="413.5" y2="278" stroke="#50f8ff"/><rect x="412" y="265" width="3" height="3" fill="#50f8ff"/><line x1="418.5" y1="265" x2="418.5" y2="273" stroke="#50f8ff"/><rect x="417" y="269" width="3" height="4" fill="#50f8ff"/><line x1="423.5" y1="273" x2="423.5" y2="278" stroke="#50f8ff"/><rect x="422" y="274" width="3" height="3" fill="#50f8ff"/><line x1="429.5" y1="282" x2="429.5" y2="284" stroke="#e0e0c0"/><rect x="428" y="282" width="3" height="2" fill="#e0e0c0"/><line x1="434.5" y1="282" x2="434.5" y2="282" stroke="#ff3c3c"/><line x1="434.5" y1="283" x2="434.5" y2="283" stroke="#ff3c3c"/><rect x="433.5" y="282.5" width="2" height="1" fill="#000" stroke="#ff3c3c" stroke-width="1"/><line x1="439.5" y1="270" x2="439.5" y2="276" stroke="#ff3c3c"/><line x1="439.5" y1="282" x2="439.5" y2="282" stroke="#ff3c3c"/><rect x="438.5" y="276.5" width="2" height="6" fill="#000" stroke="#ff3c3c" stroke-width="1"/><line x1="445.5" y1="256" x2="445.5" y2="260" stroke="#ff3c3c"/><line x1="445.5" y1="276" x2="445.5" y2="276" stroke="#ff3c3c"/><rect x="444.5" y="260.5" width="2" height="16" fill="#000" stroke="#ff3c3c" stroke-width="1"/><line x1="450.5" y1="232" x2="450.5" y2="232" stroke="#ff3c3c"/><line x1="450.5" y1="262" x2="450.5" y2="262" stroke="#ff3c3c"/><rect x="449.5" y="232.5" width="2" height="30" fill="#000" stroke="#ff3c3c" stroke-width="1"/><line x1="455.5" y1="230" x2="455.5" y2="246" stroke="#50f8ff"/><rect x="454" y="238" width="3" height="6" fill="#50f8ff"/><line x1="461.5" y1="231" x2="461.5" y2="231" stroke="#ff3c3c"/><line x1="461.5" y1="237" x2="461.5" y2="239" stroke="#ff3c3c"/><rect x="460.5" y="231.5" width="2" height="6" fill="#000" stroke="#ff3c3c" stroke-width="1"/><line x1="466.5" y1="201" x2="466.5" y2="201" stroke="#ff3c3c"/><line x1="466.5" y1="234" x2="466.5" y2="234" stroke="#ff3c3c"/><rect x="465.5" y="201.5" width="2" height="33" fill="#000" stroke="#ff3c3c" stroke-width="1"/><line x1="471.5" y1="183" x2="471.5" y2="215" stroke="#50f8ff"/><rect x="470" y="204" width="3" height="11" fill="#50f8ff"/><line x1="477.5" y1="200" x2="477.5" y2="207" stroke="#ff3c3c"/><line x1="477.5" y1="217" x2="477.5" y2="217" stroke="#ff3c3c"/><rect x="476.5" y="207.5" width="2" height="10" fill="#000" stroke="#ff3c3c" stroke-width="1"/><line x1="482.5" y1="182" x2="482.5" y2="190" stroke="#ff3c3c"/><line x1="482.5" y1="210" x2="482.5" y2="210" stroke="#ff3c3c"/><rect x="481.5" y="190.5" width="2" height="20" fill="#000" stroke="#ff3c3c" stroke-width="1"/><line x1="487.5" y1="170" x2="487.5" y2="178" stroke="#ff3c3c"/><line x1="487.5" y1="190" x2="487.5" y2="194" stroke="#ff3c3c"/><rect x="486.5" y="178.5" width="2" height="12" fill="#000" stroke="#ff3c3c" stroke-width="1"/><line x1="493.5" y1="162" x2="493.5" y2="185" stroke="#50f8ff"/><rect x="492" y="175" width="3" height="4" fill="#50f8ff"/><line x1="498.5" y1="176" x2="498.5" y2="198" stroke="#50f8ff"/><rect x="497" y="186" width="3" height="12" fill="#50f8ff"/><line x1="503.5" y1="195" x2="503.5" y2="210" stroke="#50f8ff"/><rect x="502" y="196" width="3" height="9" fill="#50f8ff"/><line x1="509.5" y1="194" x2="509.5" y2="194" stroke="#ff3c3c"/><line x1="509.5" y1="206" x2="509.5" y2="206" stroke="#ff3c3c"/><rect x="508.5" y="194.5" width="2" height="12" fill="#000" stroke="#ff3c3c" stroke-width="1"/><line x1="514.5" y1="184" x2="514.5" y2="186" stroke="#ff3c3c"/><line x1="514.5" y1="195" x2="514.5" y2="195" stroke="#ff3c3c"/><rect x="513.5" y="186.5" width="2" height="9" fill="#000" stroke="#ff3c3c" stroke-width="1"/><line x1="519.5" y1="187" x2="519.5" y2="209" stroke="#50f8ff"/><rect x="518" y="187" width="3" height="22" fill="#50f8ff"/><line x1="525.5" y1="206" x2="525.5" y2="218" stroke="#50f8ff"/><rect x="524" y="206" width="3" height="12" fill="#50f8ff"/><line x1="530.5" y1="211" x2="530.5" y2="211" stroke="#ff3c3c"/><line x1="530.5" y1="218" x2="530.5" y2="219" stroke="#ff3c3c"/><rect x="529.5" y="211.5" width="2" height="7" fill="#000" stroke="#ff3c3c" stroke-width="1"/><line x1="535.5" y1="208" x2="535.5" y2="215" stroke="#50f8ff"/><rect x="534" y="210" width="3" height="4" fill="#50f8ff"/><line x1="541.5" y1="204" x2="541.5" y2="224" stroke="#50f8ff"/><rect x="540" y="207" width="3" height="17" fill="#50f8ff"/><line x1="546.5" y1="220" x2="546.5" y2="220" stroke="#ff3c3c"/><line x1="546.5" y1="229" x2="546.5" y2="229" stroke="#ff3c3c"/><rect x="545.5" y="220.5" width="2" height="9" fill="#000" stroke="#ff3c3c" stroke-width="1"/><line x1="551.5" y1="223" x2="551.5" y2="227" stroke="#50f8ff"/><rect x="550" y="223" width="3" height="4" fill="#50f8ff"/><line x1="557.5" y1="228" x2="557.5" y2="242" stroke="#50f8ff"/><rect x="556" y="228" width="3" height="14" fill="#50f8ff"/><line x1="562.5" y1="235" x2="562.5" y2="235" stroke="#ff3c3c"/><line x1="562.5" y1="241" x2="562.5" y2="241" stroke="#ff3c3c"/><rect x="561.5" y="235.5" width="2" height="6" fill="#000" stroke="#ff3c3c" stroke-width="1"/><line x1="567.5" y1="233" x2="567.5" y2="233" stroke="#ff3c3c"/><line x1="567.5" y1="236" x2="567.5" y2="236" stroke="#ff3c3c"/><rect x="566.5" y="233.5" width="2" height="3" fill="#000" stroke="#ff3c3c" stroke-width="1"/><line x1="572.5" y1="204" x2="572.5" y2="212" stroke="#ff3c3c"/><line x1="572.5" y1="242" x2="572.5" y2="242" stroke="#ff3c3c"/><rect x="571.5" y="212.5" width="2" height="30" fill="#000" stroke="#ff3c3c" stroke-width="1"/><line x1="578.5" y1="213" x2="578.5" y2="213" stroke="#ff3c3c"/><line x1="578.5" y1="221" x2="578.5" y2="221" stroke="#ff3c3c"/><rect x="577.5" y="213.5" width="2" height="8" fill="#000" stroke="#ff3c3c" stroke-width="1"/><line x1="583.5" y1="201" x2="583.5" y2="211" stroke="#ff3c3c"/><line x1="583.5" y1="219" x2="583.5" y2="219" stroke="#ff3c3c"/><rect x="582.5" y="211.5" width="2" height="8" fill="#000" stroke="#ff3c3c" stroke-width="1"/><line x1="588.5" y1="207" x2="588.5" y2="234" stroke="#50f8ff"/><rect x="587" y="207" width="3" height="27" fill="#50f8ff"/><line x1="594.5" y1="240" x2="594.5" y2="252" stroke="#50f8ff"/><rect x="593" y="244" width="3" height="8" fill="#50f8ff"/><line x1="599.5" y1="248" x2="599.5" y2="248" stroke="#ff3c3c"/><line x1="599.5" y1="258" x2="599.5" y2="258" stroke="#ff3c3c"/><rect x="598.5" y="248.5" width="2" height="10" fill="#000" stroke="#ff3c3c" stroke-width="1"/><line x1="604.5" y1="225" x2="604.5" y2="225" stroke="#ff3c3c"/><line x1="604.5" y1="247" x2="604.5" y2="247" stroke="#ff3c3c"/><rect x="603.5" y="225.5" width="2" height="22" fill="#000" stroke="#ff3c3c" stroke-width="1"/><line x1="610.5" y1="226" x2="610.5" y2="239" stroke="#50f8ff"/><rect x="609" y="226" width="3" height="12" fill="#50f8ff"/><line x1="615.5" y1="234" x2="615.5" y2="234" stroke="#ff3c3c"/><line x1="615.5" y1="247" x2="615.5" y2="252" stroke="#ff3c3c"/><rect x="614.5" y="234.5" width="2" height="13" fill="#000" stroke="#ff3c3c" stroke-width="1"/><line x1="620.5" y1="205" x2="620.5" y2="211" stroke="#ff3c3c"/><line x1="620.5" y1="226" x2="620.5" y2="226" stroke="#ff3c3c"/><rect x="619.5" y="211.5" width="2" height="15" fill="#000" stroke="#ff3c3c" stroke-width="1"/><line x1="626.5" y1="211" x2="626.5" y2="219" stroke="#50f8ff"/><rect x="625" y="212" width="3" height="6" fill="#50f8ff"/><line x1="631.5" y1="195" x2="631.5" y2="221" stroke="#50f8ff"/><rect x="630" y="219" width="3" height="2" fill="#50f8ff"/><line x1="636.5" y1="212" x2="636.5" y2="233" stroke="#50f8ff"/><rect x="635" y="222" width="3" height="11" fill="#50f8ff"/><line x1="642.5" y1="224" x2="642.5" y2="226" stroke="#ff3c3c"/><line x1="642.5" y1="232" x2="642.5" y2="233" stroke="#ff3c3c"/><rect x="641.5" y="226.5" width="2" height="6" fill="#000" stroke="#ff3c3c" stroke-width="1"/><line x1="647.5" y1="220" x2="647.5" y2="220" stroke="#ff3c3c"/><line x1="647.5" y1="228" x2="647.5" y2="228" stroke="#ff3c3c"/><rect x="646.5" y="220.5" width="2" height="8" fill="#000" stroke="#ff3c3c" stroke-width="1"/><line x1="652.5" y1="217" x2="652.5" y2="224" stroke="#50f8ff"/><rect x="651" y="220" width="3" height="2" fill="#50f8ff"/><line x1="658.5" y1="223" x2="658.5" y2="226" stroke="#50f8ff"/><rect x="657" y="223" width="3" height="3" fill="#50f8ff"/><line x1="663.5" y1="231" x2="663.5" y2="236" stroke="#50f8ff"/><rect x="662" y="231" width="3" height="5" fill="#50f8ff"/><line x1="668.5" y1="218" x2="668.5" y2="227" stroke="#ff3c3c"/><line x1="668.5" y1="235" x2="668.5" y2="235" stroke="#ff3c3c"/><rect x="667.5" y="227.5" width="2" height="8" fill="#000" stroke="#ff3c3c" stroke-width="1"/><line x1="674.5" y1="205" x2="674.5" y2="215" stroke="#ff3c3c"/><line x1="674.5" y1="221" x2="674.5" y2="221" stroke="#ff3c3c"/><rect x="673.5" y="215.5" width="2" height="6" fill="#000" stroke="#ff3c3c" stroke-width="1"/><line x1="679.5" y1="212" x2="679.5" y2="215" stroke="#ff3c3c"/><line x1="679.5" y1="222" x2="679.5" y2="222" stroke="#ff3c3c"/><rect x="678.5" y="215.5" width="2" height="7" fill="#000" stroke="#ff3c3c" stroke-width="1"/><line x1="684.5" y1="227" x2="684.5" y2="233" stroke="#50f8ff"/><rect x="683" y="227" width="3" height="6" fill="#50f8ff"/><line x1="690.5" y1="229" x2="690.5" y2="233" stroke="#50f8ff"/><rect x="689" y="229" width="3" height="4" fill="#50f8ff"/><line x1="695.5" y1="229" x2="695.5" y2="237" stroke="#50f8ff"/><rect x="694" y="232" width="3" height="4" fill="#50f8ff"/><line x1="700.5" y1="233" x2="700.5" y2="238" stroke="#50f8ff"/><rect x="699" y="233" width="3" height="5" fill="#50f8ff"/><line x1="706.5" y1="224" x2="706.5" y2="228" stroke="#ff3c3c"/><line x1="706.5" y1="241" x2="706.5" y2="241" stroke="#ff3c3c"/><rect x="705.5" y="228.5" width="2" height="13" fill="#000" stroke="#ff3c3c" stroke-width="1"/><line x1="711.5" y1="228" x2="711.5" y2="235" stroke="#50f8ff"/><rect x="710" y="228" width="3" height="7" fill="#50f8ff"/><line x1="716.5" y1="237" x2="716.5" y2="239" stroke="#50f8ff"/><rect x="715" y="237" width="3" height="2" fill="#50f8ff"/><line x1="722.5" y1="235" x2="722.5" y2="239" stroke="#50f8ff"/><rect x="721" y="236" width="3" height="3" fill="#50f8ff"/><line x1="727.5" y1="237" x2="727.5" y2="242" stroke="#50f8ff"/><rect x="726" y="237" width="3" height="5" fill="#50f8ff"/><line x1="732.5" y1="241" x2="732.5" y2="248" stroke="#50f8ff"/><rect x="731" y="241" width="3" height="7" fill="#50f8ff"/><line x1="738.5" y1="243" x2="738.5" y2="243" stroke="#ff3c3c"/><line x1="738.5" y1="249" x2="738.5" y2="249" stroke="#ff3c3c"/><rect x="737.5" y="243.5" width="2" height="6" fill="#000" stroke="#ff3c3c" stroke-width="1"/><line x1="743.5" y1="245" x2="743.5" y2="251" stroke="#50f8ff"/><rect x="742" y="247" width="3" height="3" fill="#50f8ff"/><line x1="748.5" y1="248" x2="748.5" y2="253" stroke="#50f8ff"/><rect x="747" y="248" width="3" height="5" fill="#50f8ff"/><line x1="754.5" y1="245" x2="754.5" y2="252" stroke="#50f8ff"/><rect x="753" y="248" width="3" height="1.5" fill="#50f8ff"/><line x1="759.5" y1="252" x2="759.5" y2="265" stroke="#50f8ff"/><rect x="758" y="252" width="3" height="6" fill="#50f8ff"/><line x1="764.5" y1="255" x2="764.5" y2="262" stroke="#50f8ff"/><rect x="763" y="255" width="3" height="7" fill="#50f8ff"/><line x1="770.5" y1="270" x2="770.5" y2="279" stroke="#50f8ff"/><rect x="769" y="272" width="3" height="4" fill="#50f8ff"/><line x1="775.5" y1="270" x2="775.5" y2="270" stroke="#ff3c3c"/><line x1="775.5" y1="278" x2="775.5" y2="278" stroke="#ff3c3c"/><rect x="774.5" y="270.5" width="2" height="8" fill="#000" stroke="#ff3c3c" stroke-width="1"/><line x1="780.5" y1="262" x2="780.5" y2="265" stroke="#ff3c3c"/><line x1="780.5" y1="269" x2="780.5" y2="269" stroke="#ff3c3c"/><rect x="779.5" y="265.5" width="2" height="4" fill="#000" stroke="#ff3c3c" stroke-width="1"/><line x1="786.5" y1="265" x2="786.5" y2="270" stroke="#50f8ff"/><rect x="785" y="266" width="3" height="2" fill="#50f8ff"/><line x1="791.5" y1="266" x2="791.5" y2="269" stroke="#50f8ff"/><rect x="790" y="266" width="3" height="3" fill="#50f8ff"/><line x1="796.5" y1="262" x2="796.5" y2="262" stroke="#ff3c3c"/><line x1="796.5" y1="269" x2="796.5" y2="269" stroke="#ff3c3c"/><rect x="795.5" y="262.5" width="2" height="7" fill="#000" stroke="#ff3c3c" stroke-width="1"/><line x1="802.5" y1="255" x2="802.5" y2="266" stroke="#50f8ff"/><rect x="801" y="259" width="3" height="5" fill="#50f8ff"/><line x1="807.5" y1="265" x2="807.5" y2="269" stroke="#50f8ff"/><rect x="806" y="265" width="3" height="4" fill="#50f8ff"/><line x1="812.5" y1="263" x2="812.5" y2="268" stroke="#ff3c3c"/><line x1="812.5" y1="272" x2="812.5" y2="272" stroke="#ff3c3c"/><rect x="811.5" y="268.5" width="2" height="4" fill="#000" stroke="#ff3c3c" stroke-width="1"/><line x1="818.5" y1="268" x2="818.5" y2="271" stroke="#50f8ff"/><rect x="817" y="268" width="3" height="3" fill="#50f8ff"/><line x1="823.5" y1="260" x2="823.5" y2="260" stroke="#ff3c3c"/><line x1="823.5" y1="272" x2="823.5" y2="272" stroke="#ff3c3c"/><rect x="822.5" y="260.5" width="2" height="12" fill="#000" stroke="#ff3c3c" stroke-width="1"/><line x1="828.5" y1="256" x2="828.5" y2="256" stroke="#ff3c3c"/><line x1="828.5" y1="261" x2="828.5" y2="261" stroke="#ff3c3c"/><rect x="827.5" y="256.5" width="2" height="5" fill="#000" stroke="#ff3c3c" stroke-width="1"/><line x1="834.5" y1="255" x2="834.5" y2="257" stroke="#ff3c3c"/><line x1="834.5" y1="259" x2="834.5" y2="261" stroke="#ff3c3c"/><rect x="833.5" y="257.5" width="2" height="2" fill="#000" stroke="#ff3c3c" stroke-width="1"/><line x1="839.5" y1="248" x2="839.5" y2="249" stroke="#ff3c3c"/><line x1="839.5" y1="258" x2="839.5" y2="258" stroke="#ff3c3c"/><rect x="838.5" y="249.5" width="2" height="9" fill="#000" stroke="#ff3c3c" stroke-width="1"/><line x1="844.5" y1="245" x2="844.5" y2="253" stroke="#50f8ff"/><rect x="843" y="247" width="3" height="6" fill="#50f8ff"/><line x1="849.5" y1="248" x2="849.5" y2="250" stroke="#ff3c3c"/><line x1="849.5" y1="254" x2="849.5" y2="254" stroke="#ff3c3c"/><rect x="848.5" y="250.5" width="2" height="4" fill="#000" stroke="#ff3c3c" stroke-width="1"/><line x1="855.5" y1="250" x2="855.5" y2="256" stroke="#50f8ff"/><rect x="854" y="252" width="3" height="4" fill="#50f8ff"/><line x1="860.5" y1="261" x2="860.5" y2="261" stroke="#ff3c3c"/><line x1="860.5" y1="263" x2="860.5" y2="267" stroke="#ff3c3c"/><rect x="859.5" y="261.5" width="2" height="2" fill="#000" stroke="#ff3c3c" stroke-width="1"/><line x1="865.5" y1="250" x2="865.5" y2="252" stroke="#ff3c3c"/><line x1="865.5" y1="259" x2="865.5" y2="259" stroke="#ff3c3c"/><rect x="864.5" y="252.5" width="2" height="7" fill="#000" stroke="#ff3c3c" stroke-width="1"/><line x1="871.5" y1="236" x2="871.5" y2="246" stroke="#ff3c3c"/><line x1="871.5" y1="257" x2="871.5" y2="257" stroke="#ff3c3c"/><rect x="870.5" y="246.5" width="2" height="11" fill="#000" stroke="#ff3c3c" stroke-width="1"/><line x1="876.5" y1="238" x2="876.5" y2="240" stroke="#ff3c3c"/><line x1="876.5" y1="248" x2="876.5" y2="249" stroke="#ff3c3c"/><rect x="875.5" y="240.5" width="2" height="8" fill="#000" stroke="#ff3c3c" stroke-width="1"/><line x1="881.5" y1="234" x2="881.5" y2="234" stroke="#ff3c3c"/><line x1="881.5" y1="240" x2="881.5" y2="247" stroke="#ff3c3c"/><rect x="880.5" y="234.5" width="2" height="6" fill="#000" stroke="#ff3c3c" stroke-width="1"/><line x1="887.5" y1="224" x2="887.5" y2="233" stroke="#ff3c3c"/><line x1="887.5" y1="236" x2="887.5" y2="240" stroke="#ff3c3c"/><rect x="886.5" y="233.5" width="2" height="3" fill="#000" stroke="#ff3c3c" stroke-width="1"/><line x1="892.5" y1="213" x2="892.5" y2="218" stroke="#ff3c3c"/><line x1="892.5" y1="236" x2="892.5" y2="236" stroke="#ff3c3c"/><rect x="891.5" y="218.5" width="2" height="18" fill="#000" stroke="#ff3c3c" stroke-width="1"/><line x1="897.5" y1="210" x2="897.5" y2="228" stroke="#50f8ff"/><rect x="896" y="215" width="3" height="11" fill="#50f8ff"/><line x1="903.5" y1="218" x2="903.5" y2="221" stroke="#ff3c3c"/><line x1="903.5" y1="226" x2="903.5" y2="226" stroke="#ff3c3c"/><rect x="902.5" y="221.5" width="2" height="5" fill="#000" stroke="#ff3c3c" stroke-width="1"/><line x1="908.5" y1="213" x2="908.5" y2="216" stroke="#ff3c3c"/><line x1="908.5" y1="222" x2="908.5" y2="222" stroke="#ff3c3c"/><rect x="907.5" y="216.5" width="2" height="6" fill="#000" stroke="#ff3c3c" stroke-width="1"/><line x1="913.5" y1="210" x2="913.5" y2="214" stroke="#ff3c3c"/><line x1="913.5" y1="218" x2="913.5" y2="218" stroke="#ff3c3c"/><rect x="912.5" y="214.5" width="2" height="4" fill="#000" stroke="#ff3c3c" stroke-width="1"/><line x1="919.5" y1="212" x2="919.5" y2="221" stroke="#50f8ff"/><rect x="918" y="214" width="3" height="5" fill="#50f8ff"/><line x1="924.5" y1="217" x2="924.5" y2="232" stroke="#50f8ff"/><rect x="923" y="218" width="3" height="3" fill="#50f8ff"/><line x1="929.5" y1="214" x2="929.5" y2="218" stroke="#ff3c3c"/><line x1="929.5" y1="224" x2="929.5" y2="224" stroke="#ff3c3c"/><rect x="928.5" y="218.5" width="2" height="6" fill="#000" stroke="#ff3c3c" stroke-width="1"/><line x1="935.5" y1="193" x2="935.5" y2="196" stroke="#ff3c3c"/><line x1="935.5" y1="220" x2="935.5" y2="220" stroke="#ff3c3c"/><rect x="934.5" y="196.5" width="2" height="24" fill="#000" stroke="#ff3c3c" stroke-width="1"/><line x1="940.5" y1="190" x2="940.5" y2="195" stroke="#ff3c3c"/><line x1="940.5" y1="198" x2="940.5" y2="202" stroke="#ff3c3c"/><rect x="939.5" y="195.5" width="2" height="3" fill="#000" stroke="#ff3c3c" stroke-width="1"/><line x1="945.5" y1="163" x2="945.5" y2="163" stroke="#ff3c3c"/><line x1="945.5" y1="199" x2="945.5" y2="199" stroke="#ff3c3c"/><rect x="944.5" y="163.5" width="2" height="36" fill="#000" stroke="#ff3c3c" stroke-width="1"/><line x1="951.5" y1="128" x2="951.5" y2="147" stroke="#ff3c3c"/><line x1="951.5" y1="154" x2="951.5" y2="162" stroke="#ff3c3c"/><rect x="950.5" y="147.5" width="2" height="7" fill="#000" stroke="#ff3c3c" stroke-width="1"/><line x1="956.5" y1="134" x2="956.5" y2="155" stroke="#50f8ff"/><rect x="955" y="148" width="3" height="7" fill="#50f8ff"/><line x1="961.5" y1="148" x2="961.5" y2="153" stroke="#ff3c3c"/><line x1="961.5" y1="158" x2="961.5" y2="158" stroke="#ff3c3c"/><rect x="960.5" y="153.5" width="2" height="5" fill="#000" stroke="#ff3c3c" stroke-width="1"/><line x1="967.5" y1="140" x2="967.5" y2="148" stroke="#ff3c3c"/><line x1="967.5" y1="154" x2="967.5" y2="154" stroke="#ff3c3c"/><rect x="966.5" y="148.5" width="2" height="6" fill="#000" stroke="#ff3c3c" stroke-width="1"/><line x1="972.5" y1="125" x2="972.5" y2="148" stroke="#50f8ff"/><rect x="971" y="144" width="3" height="3" fill="#50f8ff"/><line x1="977.5" y1="116" x2="977.5" y2="119" stroke="#ff3c3c"/><line x1="977.5" y1="149" x2="977.5" y2="155" stroke="#ff3c3c"/><rect x="976.5" y="119.5" width="2" height="30" fill="#000" stroke="#ff3c3c" stroke-width="1"/><line x1="983.5" y1="110" x2="983.5" y2="154" stroke="#50f8ff"/><rect x="982" y="116" width="3" height="27" fill="#50f8ff"/><line x1="988.5" y1="122" x2="988.5" y2="128" stroke="#ff3c3c"/><line x1="988.5" y1="140" x2="988.5" y2="150" stroke="#ff3c3c"/><rect x="987.5" y="128.5" width="2" height="12" fill="#000" stroke="#ff3c3c" stroke-width="1"/><line x1="993.5" y1="117" x2="993.5" y2="117" stroke="#ff3c3c"/><line x1="993.5" y1="126" x2="993.5" y2="135" stroke="#ff3c3c"/><rect x="992.5" y="117.5" width="2" height="9" fill="#000" stroke="#ff3c3c" stroke-width="1"/><line x1="999.5" y1="90" x2="999.5" y2="96" stroke="#ff3c3c"/><line x1="999.5" y1="120" x2="999.5" y2="120" stroke="#ff3c3c"/><rect x="998.5" y="96.5" width="2" height="24" fill="#000" stroke="#ff3c3c" stroke-width="1"/><line x1="1004.5" y1="73" x2="1004.5" y2="84" stroke="#ff3c3c"/><line x1="1004.5" y1="92" x2="1004.5" y2="98" stroke="#ff3c3c"/><rect x="1003.5" y="84.5" width="2" height="8" fill="#000" stroke="#ff3c3c" stroke-width="1"/><line x1="1009.5" y1="65" x2="1009.5" y2="80" stroke="#ff3c3c"/><line x1="1009.5" y1="89" x2="1009.5" y2="96" stroke="#ff3c3c"/><rect x="1008.5" y="80.5" width="2" height="9" fill="#000" stroke="#ff3c3c" stroke-width="1"/><line x1="1015.5" y1="80" x2="1015.5" y2="100" stroke="#50f8ff"/><rect x="1014" y="82" width="3" height="16" fill="#50f8ff"/><line x1="1020.5" y1="87" x2="1020.5" y2="118" stroke="#50f8ff"/><rect x="1019" y="89" width="3" height="29" fill="#50f8ff"/><line x1="1025.5" y1="119" x2="1025.5" y2="122" stroke="#ff3c3c"/><line x1="1025.5" y1="125" x2="1025.5" y2="139" stroke="#ff3c3c"/><rect x="1024.5" y="122.5" width="2" height="3" fill="#000" stroke="#ff3c3c" stroke-width="1"/><line x1="1031.5" y1="92" x2="1031.5" y2="114" stroke="#ff3c3c"/><line x1="1031.5" y1="131" x2="1031.5" y2="136" stroke="#ff3c3c"/><rect x="1030.5" y="114.5" width="2" height="17" fill="#000" stroke="#ff3c3c" stroke-width="1"/><line x1="1036.5" y1="78" x2="1036.5" y2="85" stroke="#ff3c3c"/><line x1="1036.5" y1="103" x2="1036.5" y2="103" stroke="#ff3c3c"/><rect x="1035.5" y="85.5" width="2" height="18" fill="#000" stroke="#ff3c3c" stroke-width="1"/><line x1="1041.5" y1="66" x2="1041.5" y2="66" stroke="#ff3c3c"/><line x1="1041.5" y1="74" x2="1041.5" y2="78" stroke="#ff3c3c"/><rect x="1040.5" y="66.5" width="2" height="8" fill="#000" stroke="#ff3c3c" stroke-width="1"/><line x1="1047.5" y1="47" x2="1047.5" y2="90" stroke="#50f8ff"/><rect x="1046" y="61" width="3" height="27" fill="#50f8ff"/><polyline points="0.0,301.0 2.6,303.0 26.0,318.6 45.2,331.4 64.6,331.0 80.7,330.0 100.0,323.4 113.8,320.0 120.4,318.5 140.0,313.8 163.9,309.5 181.2,301.4 198.5,297.3 215.0,295.6 230.8,291.8 241.2,289.5 256.2,284.8 273.5,279.6 290.0,279.0 308.0,277.3 325.4,276.8 342.7,276.8 356.6,276.0 365.0,276.8 383.0,278.7 403.9,280.4 417.7,278.7 435.0,279.8 448.0,275.2 456.0,274.6 467.7,265.4 477.0,259.5 485.0,252.3 498.5,237.8 511.2,228.9 517.0,228.6 529.8,221.2 541.0,213.0 550.2,209.2 563.0,208.7 581.5,210.2 590.8,213.8 600.0,221.2 610.4,220.8 618.0,225.4 633.5,226.2 648.8,227.0 664.2,227.7 671.9,226.2 679.6,227.0 695.0,228.2 720.8,227.0 736.2,230.8 751.5,233.8 766.9,239.2 782.3,245.4 790.0,249.2 800.4,253.0 815.8,257.7 828.0,260.0 846.5,260.8 858.8,262.3 869.6,260.8 878.0,259.0 890.3,255.3 902.6,250.4 914.9,243.6 920.0,241.0 933.9,234.8 947.7,223.7 961.6,209.9 978.2,192.5 989.3,182.9 1003.1,166.9 1008.6,160.0 1026.8,137.8 1034.6,130.0 1045.4,119.0" fill="none" stroke="#ff1010" stroke-width="3" stroke-linejoin="round" shape-rendering="crispEdges"/><polyline points="2.2,325.0 10.8,332.5 27.0,334.0 43.0,334.7 64.6,331.0 80.7,330.4 88.3,325.5 98.5,319.2 113.0,312.3 126.0,310.0 140.0,306.2 148.9,304.8 167.3,306.6 181.2,299.0 198.5,294.5 215.0,289.8 221.5,286.6 235.4,282.5 248.0,282.5 265.4,279.6 279.3,276.8 290.0,276.5 312.7,274.4 323.0,276.8 337.0,277.3 354.3,278.5 365.0,279.6 383.0,279.8 406.2,279.8 417.7,278.7 435.0,278.5 445.5,275.2 458.6,268.0 469.0,256.9 477.0,249.7 485.4,240.0 494.0,228.3 502.6,216.0 511.2,204.3 517.3,202.4 529.0,199.0 539.0,201.0 553.8,208.3 563.0,214.8 576.0,218.5 590.8,221.2 600.0,228.6 610.4,230.8 618.0,230.8 628.8,226.2 641.2,225.4 656.5,227.7 671.9,226.2 679.6,223.0 690.4,223.8 705.4,227.7 720.8,230.0 736.2,233.8 751.5,240.0 766.9,246.2 782.3,253.0 794.2,258.5 808.0,261.5 818.8,266.2 831.2,266.2 846.5,262.3 858.8,261.5 871.2,257.7 885.0,250.0 890.3,246.7 902.6,241.7 914.9,236.2 920.0,232.0 933.9,223.0 940.8,218.2 947.7,211.2 954.6,203.0 964.3,193.2 972.6,185.0 981.0,175.2 989.3,161.4 991.0,160.0 1000.0,144.2 1004.8,136.6 1023.2,120.9 1034.3,110.7 1045.4,102.4" fill="none" stroke="#f0f000" stroke-width="1" shape-rendering="crispEdges"/><polyline points="2.2,333.4 13.0,333.0 21.5,331.0 28.0,332.5 41.0,337.4 50.6,332.0 64.6,325.5 77.5,324.4 84.0,323.4 95.4,309.2 109.2,296.2 114.6,298.5 126.0,306.2 140.0,308.5 148.9,309.0 167.9,307.2 181.2,285.2 192.7,278.3 204.3,283.5 215.0,287.0 226.2,286.0 236.6,282.5 248.0,282.0 255.0,280.2 264.3,274.4 279.3,270.4 290.0,272.7 296.5,273.3 308.0,275.6 319.6,279.6 328.9,283.1 337.0,279.6 347.4,278.5 356.6,278.0 365.0,280.2 375.0,282.0 394.6,282.0 406.2,278.7 413.0,275.8 417.7,274.0 429.3,275.8 435.0,279.1 444.2,274.6 450.7,264.7 458.6,254.3 463.8,238.6 470.3,225.5 478.0,216.6 486.6,199.4 494.0,192.6 501.4,190.1 508.7,190.8 514.9,194.4 522.0,201.2 535.4,209.2 544.6,216.6 557.5,221.2 566.8,231.4 576.0,228.6 583.4,223.0 594.5,230.5 604.2,237.7 613.5,240.8 619.6,236.2 625.8,227.0 635.0,223.0 641.2,222.3 653.5,225.4 664.2,226.2 675.0,223.0 682.7,220.0 695.0,228.5 705.4,233.0 713.0,235.4 728.5,239.2 743.8,244.6 754.6,250.0 762.3,253.0 770.0,261.5 779.2,265.4 791.2,270.0 800.4,266.2 815.8,267.0 825.0,265.4 838.8,258.5 849.6,253.8 861.9,255.4 869.6,255.4 878.0,249.1 885.4,243.6 891.5,235.0 897.7,227.6 908.8,221.4 914.9,219.6 928.3,219.6 936.6,214.0 942.2,207.0 947.7,191.9 954.6,175.2 961.6,160.0 972.5,147.9 979.9,144.2 991.0,128.5 1001.0,118.1 1010.3,97.8 1017.7,96.0 1027.0,101.5 1034.3,105.2 1045.4,96.0" fill="none" stroke="#10e010" stroke-width="1" shape-rendering="crispEdges"/><rect x="17.8" y="332.0" width="2.2" height="7" fill="#10e010"/><polygon points="14.0,338.2 23.6,338.2 18.8,344.0" fill="#10e010"/><polygon points="39.8,341.0 35.0,347.0 44.6,347.0" fill="#ff1010"/><rect x="38.8" y="346.5" width="2.2" height="6.5" fill="#ff1010"/><text x="42.5" y="347.5" font-family="Liberation Sans" font-size="16" fill="#ff1010" stroke="#ff1010" stroke-width="0.4" textLength="8" lengthAdjust="spacingAndGlyphs">B</text><circle cx="50.8" cy="337.3" r="4.3" fill="none" stroke="#f040f0" stroke-width="1"/><circle cx="50.8" cy="337.3" r="2.2" fill="none" stroke="#f040f0" stroke-width="1"/><text x="56.0" y="341.8" font-family="Liberation Sans" font-size="12" fill="#f040f0">K</text><rect x="81.9" y="318.4" width="2.2" height="7" fill="#10e010"/><polygon points="78.1,324.6 87.7,324.6 82.9,330.4" fill="#10e010"/><rect x="97.4" y="282.6" width="2.2" height="7" fill="#10e010"/><polygon points="93.6,288.8 103.2,288.8 98.4,294.6" fill="#10e010"/><rect x="102.7" y="287.0" width="2.2" height="7" fill="#10e010"/><polygon points="98.9,293.2 108.5,293.2 103.7,299.0" fill="#10e010"/><rect x="113.4" y="300.7" width="2.2" height="7" fill="#10e010"/><polygon points="109.6,306.9 119.2,306.9 114.4,312.7" fill="#10e010"/><rect x="182.5" y="269.8" width="2.2" height="7" fill="#10e010"/><polygon points="178.7,276.0 188.3,276.0 183.5,281.8" fill="#10e010"/><rect x="187.7" y="267.4" width="2.2" height="7" fill="#10e010"/><polygon points="183.9,273.6 193.5,273.6 188.7,279.4" fill="#10e010"/><rect x="199.2" y="278.0" width="2.2" height="7" fill="#10e010"/><polygon points="195.4,284.2 205.0,284.2 200.2,290.0" fill="#10e010"/><polygon points="168.0,308.0 163.2,314.0 172.8,314.0" fill="#ff1010"/><rect x="167.0" y="313.5" width="2.2" height="6.5" fill="#ff1010"/><text x="164.0" y="321.5" font-family="Liberation Sans" font-size="16" fill="#ff1010" stroke="#ff1010" stroke-width="0.4" textLength="8" lengthAdjust="spacingAndGlyphs">B</text><circle cx="204.5" cy="273.3" r="4.3" fill="none" stroke="#10e010" stroke-width="1"/><circle cx="204.5" cy="273.3" r="2.2" fill="none" stroke="#10e010" stroke-width="1"/><text x="209.7" y="277.8" font-family="Liberation Sans" font-size="12" fill="#10e010">K</text><polygon points="236.6,269.0 237.9,272.2 241.4,272.5 238.7,274.7 239.5,278.0 236.6,276.2 233.7,278.0 234.5,274.7 231.8,272.5 235.3,272.2" fill="#10e010"/><text x="241.8" y="278.0" font-family="Liberation Sans" font-size="12" fill="#10e010">M</text><polygon points="237.0,287.0 232.2,293.0 241.8,293.0" fill="#ff1010"/><rect x="236.0" y="292.5" width="2.2" height="6.5" fill="#ff1010"/><rect x="268.0" y="266.0" width="2.2" height="7" fill="#10e010"/><polygon points="264.2,272.2 273.8,272.2 269.0,278.0" fill="#10e010"/><polygon points="305.2,259.4 309.2,263.7 305.2,268.0 301.2,263.7" fill="#10e010"/><text x="311.0" y="268.6" font-family="Liberation Sans" font-size="12" fill="#10e010">R</text><rect x="289.8" y="270.0" width="2.2" height="7" fill="#10e010"/><polygon points="286.0,276.2 295.6,276.2 290.8,282.0" fill="#10e010"/><text x="292.0" y="289.5" font-family="Liberation Sans" font-size="16" fill="#ff1010" stroke="#ff1010" stroke-width="0.4" textLength="8" lengthAdjust="spacingAndGlyphs">B</text><polygon points="332.9,291.8 328.1,297.8 337.7,297.8" fill="#ff1010"/><rect x="331.9" y="297.3" width="2.2" height="6.5" fill="#ff1010"/><rect x="337.7" y="273.4" width="2.2" height="7" fill="#10e010"/><polygon points="333.9,279.6 343.5,279.6 338.7,285.4" fill="#10e010"/><text x="345.0" y="301.0" font-family="Liberation Sans" font-size="16" fill="#ff1010" stroke="#ff1010" stroke-width="0.4" textLength="8" lengthAdjust="spacingAndGlyphs">B</text><rect x="362.5" y="277.6" width="2.2" height="7" fill="#10e010"/><polygon points="358.7,283.8 368.3,283.8 363.5,289.6" fill="#10e010"/><text x="393.0" y="298.8" font-family="Liberation Sans" font-size="16" fill="#ff1010" stroke="#ff1010" stroke-width="0.4" textLength="8" lengthAdjust="spacingAndGlyphs">B</text><polygon points="408.0,283.3 403.2,289.3 412.8,289.3" fill="#ff1010"/><rect x="407.0" y="288.8" width="2.2" height="6.5" fill="#ff1010"/><rect x="422.5" y="273.6" width="2.2" height="7" fill="#10e010"/><polygon points="418.7,279.8 428.3,279.8 423.5,285.6" fill="#10e010"/><polygon points="439.6,286.3 434.8,292.3 444.4,292.3" fill="#ff1010"/><rect x="438.6" y="291.8" width="2.2" height="6.5" fill="#ff1010"/><text x="441.0" y="293.9" font-family="Liberation Sans" font-size="16" fill="#ff1010" stroke="#ff1010" stroke-width="0.4" textLength="8" lengthAdjust="spacingAndGlyphs">B</text><rect x="455.0" y="232.0" width="2.2" height="7" fill="#10e010"/><polygon points="451.2,238.2 460.8,238.2 456.0,244.0" fill="#10e010"/><rect x="470.8" y="184.9" width="2.2" height="7" fill="#10e010"/><polygon points="467.0,191.1 476.6,191.1 471.8,196.9" fill="#10e010"/><rect x="496.9" y="174.4" width="2.2" height="7" fill="#10e010"/><polygon points="493.1,180.6 502.7,180.6 497.9,186.4" fill="#10e010"/><rect x="502.8" y="192.3" width="2.2" height="7" fill="#10e010"/><polygon points="499.0,198.5 508.6,198.5 503.8,204.3" fill="#10e010"/><polygon points="566.8,237.8 562.0,243.8 571.6,243.8" fill="#ff1010"/><rect x="565.8" y="243.3" width="2.2" height="6.5" fill="#ff1010"/><rect x="592.5" y="235.0" width="2.2" height="7" fill="#10e010"/><polygon points="588.7,241.2 598.3,241.2 593.5,247.0" fill="#10e010"/><polygon points="605.0,250.0 600.2,256.0 609.8,256.0" fill="#ff1010"/><rect x="604.0" y="255.5" width="2.2" height="6.5" fill="#ff1010"/><text x="617.3" y="250.0" font-family="Liberation Sans" font-size="16" fill="#ff1010" stroke="#ff1010" stroke-width="0.4" textLength="8" lengthAdjust="spacingAndGlyphs">B</text><polygon points="641.2,205.3 645.2,209.6 641.2,213.9 637.2,209.6" fill="#10e010"/><text x="646.5" y="214.6" font-family="Liberation Sans" font-size="12" fill="#10e010">R</text><rect x="641.0" y="225.0" width="2.2" height="7" fill="#10e010"/><polygon points="637.2,231.2 646.8,231.2 642.0,237.0" fill="#10e010"/><polygon points="647.0,236.0 642.2,242.0 651.8,242.0" fill="#ff1010"/><rect x="646.0" y="241.5" width="2.2" height="6.5" fill="#ff1010"/><rect x="657.0" y="224.2" width="2.2" height="7" fill="#10e010"/><polygon points="653.2,230.4 662.8,230.4 658.0,236.2" fill="#10e010"/><circle cx="662.1" cy="218.8" r="4.3" fill="none" stroke="#10e010" stroke-width="1"/><circle cx="662.1" cy="218.8" r="2.2" fill="none" stroke="#10e010" stroke-width="1"/><text x="667.3" y="223.3" font-family="Liberation Sans" font-size="12" fill="#10e010">K</text><polygon points="668.8,239.0 664.0,245.0 673.6,245.0" fill="#ff1010"/><rect x="667.8" y="244.5" width="2.2" height="6.5" fill="#ff1010"/><text x="665.0" y="250.5" font-family="Liberation Sans" font-size="16" fill="#ff1010" stroke="#ff1010" stroke-width="0.4" textLength="8" lengthAdjust="spacingAndGlyphs">B</text><rect x="684.0" y="216.5" width="2.2" height="7" fill="#10e010"/><polygon points="680.2,222.7 689.8,222.7 685.0,228.5" fill="#10e010"/><polygon points="705.4,243.0 700.6,249.0 710.2,249.0" fill="#ff1010"/><rect x="704.4" y="248.5" width="2.2" height="6.5" fill="#ff1010"/><polygon points="738.0,253.0 733.2,259.0 742.8,259.0" fill="#ff1010"/><rect x="737.0" y="258.5" width="2.2" height="6.5" fill="#ff1010"/><rect x="742.0" y="242.6" width="2.2" height="7" fill="#10e010"/><polygon points="738.2,248.8 747.8,248.8 743.0,254.6" fill="#10e010"/><rect x="768.7" y="259.5" width="2.2" height="7" fill="#10e010"/><polygon points="764.9,265.7 774.5,265.7 769.7,271.5" fill="#10e010"/><polygon points="773.8,281.0 769.0,287.0 778.6,287.0" fill="#ff1010"/><rect x="772.8" y="286.5" width="2.2" height="6.5" fill="#ff1010"/><circle cx="779.4" cy="282.5" r="4.3" fill="none" stroke="#f040f0" stroke-width="1"/><circle cx="779.4" cy="282.5" r="2.2" fill="none" stroke="#f040f0" stroke-width="1"/><text x="784.6" y="287.0" font-family="Liberation Sans" font-size="12" fill="#f040f0">K</text><rect x="854.0" y="251.8" width="2.2" height="7" fill="#10e010"/><polygon points="850.2,258.0 859.8,258.0 855.0,263.8" fill="#10e010"/><text x="866.5" y="273.0" font-family="Liberation Sans" font-size="16" fill="#ff1010" stroke="#ff1010" stroke-width="0.4" textLength="8" lengthAdjust="spacingAndGlyphs">B</text><rect x="896.0" y="211.9" width="2.2" height="7" fill="#10e010"/><polygon points="892.2,218.1 901.8,218.1 897.0,223.9" fill="#10e010"/><rect x="917.6" y="213.8" width="2.2" height="7" fill="#10e010"/><polygon points="913.8,220.0 923.4,220.0 918.6,225.8" fill="#10e010"/><rect x="923.0" y="217.4" width="2.2" height="7" fill="#10e010"/><polygon points="919.2,223.6 928.8,223.6 924.0,229.4" fill="#10e010"/><text x="925.4" y="240.9" font-family="Liberation Sans" font-size="16" fill="#ff1010" stroke="#ff1010" stroke-width="0.4" textLength="8" lengthAdjust="spacingAndGlyphs">B</text><rect x="954.9" y="135.9" width="2.2" height="7" fill="#10e010"/><polygon points="951.1,142.1 960.7,142.1 955.9,147.9" fill="#10e010"/><rect x="1013.4" y="82.1" width="2.2" height="7" fill="#10e010"/><polygon points="1009.6,88.3 1019.2,88.3 1014.4,94.1" fill="#10e010"/><rect x="1018.6" y="87.6" width="2.2" height="7" fill="#10e010"/><polygon points="1014.8,93.8 1024.4,93.8 1019.6,99.6" fill="#10e010"/><circle cx="1024.4" cy="83.2" r="4.3" fill="none" stroke="#10e010" stroke-width="1"/><circle cx="1024.4" cy="83.2" r="2.2" fill="none" stroke="#10e010" stroke-width="1"/><text x="1029.6" y="87.7" font-family="Liberation Sans" font-size="12" fill="#10e010">K</text><circle cx="987.5" cy="92.8" r="4.3" fill="none" stroke="#10e010" stroke-width="1"/><circle cx="987.5" cy="92.8" r="2.2" fill="none" stroke="#10e010" stroke-width="1"/><text x="992.7" y="97.3" font-family="Liberation Sans" font-size="12" fill="#10e010">K</text><rect x="981.7" y="97.7" width="2.2" height="7" fill="#10e010"/><polygon points="977.9,103.9 987.5,103.9 982.7,109.7" fill="#10e010"/><polygon points="1048,40 1054,40 1053,42 1054,44 1051,43 1048,44 1049,42" fill="#10e010"/><text x="1056" y="44.5" font-family="Liberation Sans" font-size="6" fill="#10e010">IVI</text></g><clipPath id="cl"><rect x="0" y="412" width="1069" height="218"/></clipPath><g clip-path="url(#cl)"><polyline points="0.0,530.8 2.6,533.3 26.0,552.6 38.0,571.8 49.5,589.5 56.0,590.4 81.8,588.8 92.3,578.5 105.4,572.3 117.0,570.6 122.3,569.6 135.0,570.2 163.9,571.0 169.6,569.2 181.2,562.4 192.7,559.9 215.0,558.5 221.5,556.8 233.0,555.4 248.0,554.6 253.9,555.7 263.0,554.6 277.0,556.4 298.9,555.4 308.0,556.4 345.0,556.4 349.7,555.4 360.0,555.4 368.0,557.5 383.0,558.0 400.4,560.5 410.8,558.7 417.7,557.8 435.0,557.8 442.9,556.9 448.0,550.5 454.6,543.9 463.8,533.3 474.3,523.2 485.4,506.4 494.0,495.7 498.5,492.5 513.2,486.8 522.5,486.2 535.4,489.6 550.2,500.0 563.0,499.3 581.5,501.1 595.0,505.0 610.4,509.8 618.0,514.1 633.5,517.4 664.2,518.8 673.5,517.4 695.0,519.8 720.8,522.2 743.8,523.6 759.2,524.0 768.5,521.7 782.3,526.9 790.0,528.9 800.4,530.2 815.8,536.4 831.2,541.7 846.5,544.1 858.8,546.0 871.2,544.1 884.2,537.3 892.8,531.2 902.6,526.2 914.9,520.1 920.0,519.9 925.5,519.5 933.9,514.3 939.4,510.9 945.0,503.2 950.5,491.1 959.6,481.9 972.5,472.7 983.6,462.4 999.2,442.3 1008.5,432.0 1017.7,427.4 1030.6,429.7 1039.9,426.7 1045.4,427.9" fill="none" stroke="#8c8c8c" stroke-width="1" shape-rendering="crispEdges"/><polyline points="0.0,602.2 2.6,602.5 26.0,604.7 49.5,603.2 77.5,600.5 100.0,602.5 117.0,600.5 146.5,593.5 169.6,589.2 187.0,585.7 215.0,584.9 227.3,583.0 244.6,579.7 256.2,576.1 267.7,571.5 279.3,569.7 290.0,568.7 308.0,568.3 331.2,567.5 354.3,567.5 360.0,567.6 383.0,569.1 406.2,569.1 429.3,568.4 441.5,568.7 450.7,570.1 464.5,572.6 476.0,571.2 489.8,568.7 501.3,564.0 510.6,559.4 526.0,553.2 541.0,539.4 550.2,532.0 563.0,532.6 581.5,533.7 600.0,536.0 618.0,540.3 671.9,540.3 695.0,540.8 705.4,538.4 720.8,538.9 736.2,541.3 751.5,546.0 766.9,550.8 782.3,555.5 790.0,558.0 800.4,557.5 815.8,559.9 846.5,559.9 871.2,558.9 896.5,557.9 908.8,556.0 921.0,551.8 930.0,549.6 951.0,548.0 969.2,539.0 995.4,527.7 1008.5,520.4 1026.8,501.7 1045.1,484.7" fill="none" stroke="#8c8c8c" stroke-width="1" shape-rendering="crispEdges"/><polyline points="0.0,625.8 17.0,625.8 39.0,619.3 43.0,615.2 49.5,605.2 64.6,604.5 79.7,604.9 91.5,609.0 100.0,611.2 115.3,610.5 134.0,605.8 162.7,596.3 176.2,595.8 183.0,596.9 195.0,593.2 233.0,590.1 250.4,585.1 262.0,580.4 270.0,574.7 279.3,574.3 296.5,573.6 319.6,570.7 325.4,571.5 354.3,571.8 377.3,572.3 406.2,572.7 430.0,572.6 445.0,574.4 450.7,578.3 460.0,581.5 465.7,586.9 476.0,588.7 487.5,591.9 492.7,591.9 510.6,582.2 522.0,578.0 529.0,570.1 538.2,559.4 542.8,553.2 550.2,544.0 563.0,543.4 581.5,544.6 590.8,546.4 600.0,548.6 610.4,550.8 625.8,547.5 656.5,547.0 695.0,547.5 705.4,543.6 720.8,544.6 736.2,547.9 751.5,552.3 766.9,559.4 782.3,562.7 800.4,566.1 815.8,567.9 831.2,566.1 846.5,564.2 861.9,563.7 885.0,565.6 921.0,562.1 939.2,561.0 954.8,566.6 971.9,560.1 990.2,552.9 1005.9,548.8 1016.3,543.9 1029.4,522.8 1046.4,503.4" fill="none" stroke="#8c8c8c" stroke-width="1" shape-rendering="crispEdges"/><polyline points="0.0,554.4 2.6,556.0 22.6,571.8 48.4,593.8 53.8,594.7 70.0,594.7 87.0,590.4 99.0,584.2 112.3,581.3 126.0,579.9 140.0,578.5 163.9,577.4 173.0,574.6 183.5,569.9 192.7,568.1 215.0,568.4 221.5,566.1 238.9,564.7 251.6,562.9 267.7,561.1 290.0,561.2 308.0,560.4 345.0,560.4 354.3,559.3 360.0,559.0 371.5,561.6 383.0,562.2 400.4,562.6 412.0,561.6 435.0,561.8 442.9,561.0 448.0,556.1 457.3,548.8 465.0,543.1 474.3,536.6 486.6,525.4 498.9,517.4 508.7,514.1 517.0,509.1 535.4,508.5 550.2,510.2 572.3,511.4 587.0,513.1 600.0,517.1 610.4,518.3 625.8,523.6 641.2,525.5 671.9,526.5 695.0,526.9 720.8,527.4 743.8,530.2 766.9,530.7 782.3,535.5 790.0,538.4 800.4,539.3 815.8,543.1 831.2,545.6 846.5,548.4 858.8,548.8 871.2,548.2 878.0,546.0 890.3,539.5 902.6,536.1 914.9,531.5 924.7,530.8 930.0,527.7 940.8,517.0 954.6,508.3 968.5,498.9 975.4,491.1 979.9,487.6 991.0,479.6 1001.0,467.4 1014.0,456.6 1027.0,453.1 1038.0,449.7 1045.4,446.8" fill="none" stroke="#10e010" stroke-width="1" shape-rendering="crispEdges"/><polyline points="2.2,593.5 10.8,598.2 27.0,599.1 43.0,599.5 64.6,597.2 80.7,596.9 88.3,593.8 98.5,589.9 113.0,585.6 126.0,584.2 140.0,581.8 148.9,581.0 167.3,582.1 181.2,577.4 198.5,574.6 215.0,571.7 221.5,569.7 235.4,567.1 248.0,567.1 265.4,565.3 279.3,563.6 290.0,563.4 312.7,562.1 323.0,563.6 337.0,563.9 354.3,564.7 365.0,565.3 383.0,565.5 406.2,565.5 417.7,564.8 435.0,564.7 445.5,562.6 458.6,558.1 469.0,551.3 477.0,546.8 485.4,540.8 494.0,533.5 502.6,525.9 511.2,518.6 517.3,517.4 529.0,515.3 539.0,516.6 553.8,521.1 563.0,525.1 576.0,527.4 590.8,529.1 600.0,533.7 610.4,535.1 618.0,535.1 628.8,532.2 641.2,531.7 656.5,533.1 671.9,532.2 679.6,530.2 690.4,530.7 705.4,533.1 720.8,534.6 736.2,536.9 751.5,540.8 766.9,544.6 782.3,548.8 794.2,552.3 808.0,554.1 818.8,557.0 831.2,557.0 846.5,554.6 858.8,554.1 871.2,551.8 885.0,547.0 890.3,544.9 902.6,541.8 914.9,538.4 920.0,535.8 933.9,530.2 940.8,527.2 947.7,522.9 954.6,517.8 964.3,511.7 972.6,506.7 981.0,500.6 989.3,492.0 991.0,491.1 1000.0,481.3 1004.8,476.6 1023.2,466.9 1034.3,460.6 1045.4,455.4" fill="none" stroke="#f0f000" stroke-width="1" shape-rendering="crispEdges"/><polyline points="2.2,598.7 13.0,598.5 21.5,597.2 28.0,598.2 41.0,601.2 50.6,597.9 64.6,593.8 77.5,593.1 84.0,592.5 95.4,583.7 109.2,575.6 114.6,577.1 126.0,581.8 140.0,583.3 148.9,583.6 167.9,582.5 181.2,568.8 192.7,564.5 204.3,567.8 215.0,569.9 226.2,569.3 236.6,567.1 248.0,566.8 255.0,565.7 264.3,562.1 279.3,559.6 290.0,561.1 296.5,561.4 308.0,562.9 319.6,565.3 328.9,567.5 337.0,565.3 347.4,564.7 356.6,564.3 365.0,565.7 375.0,566.8 394.6,566.8 406.2,564.8 413.0,563.0 417.7,561.9 429.3,563.0 435.0,565.0 444.2,562.2 450.7,556.1 458.6,549.6 463.8,539.9 470.3,531.8 478.0,526.3 486.6,515.6 494.0,511.4 501.4,509.8 508.7,510.2 514.9,512.5 522.0,516.7 535.4,521.7 544.6,526.3 557.5,529.1 566.8,535.4 576.0,533.7 583.4,530.2 594.5,534.9 604.2,539.3 613.5,541.3 619.6,538.4 625.8,532.7 635.0,530.2 641.2,529.8 653.5,531.7 664.2,532.2 675.0,530.2 682.7,528.4 695.0,533.6 705.4,536.4 713.0,537.9 728.5,540.3 743.8,543.6 754.6,547.0 762.3,548.8 770.0,554.1 779.2,556.5 791.2,559.4 800.4,557.0 815.8,557.5 825.0,556.5 838.8,552.3 849.6,549.3 861.9,550.3 869.6,550.3 878.0,546.4 885.4,543.0 891.5,537.7 897.7,533.1 908.8,529.2 914.9,528.1 928.3,528.1 936.6,524.6 942.2,520.3 947.7,510.9 954.6,500.6 961.6,491.1 972.5,483.6 979.9,481.3 991.0,471.6 1001.0,465.1 1010.3,452.6 1017.7,451.4 1027.0,454.8 1034.3,457.1 1045.4,451.4" fill="none" stroke="#10e010" stroke-width="1" shape-rendering="crispEdges"/><rect x="43.5" y="595.5" width="4" height="3" fill="none" stroke="#ffffff" stroke-width="1"/><rect x="86.5" y="593.5" width="4" height="3" fill="none" stroke="#ffffff" stroke-width="1"/><rect x="128.5" y="586.5" width="4" height="3" fill="none" stroke="#ffffff" stroke-width="1"/><rect x="171.5" y="579.5" width="4" height="3" fill="none" stroke="#ffffff" stroke-width="1"/><rect x="214.5" y="573.5" width="4" height="3" fill="none" stroke="#ffffff" stroke-width="1"/><rect x="256.5" y="566.5" width="4" height="3" fill="none" stroke="#ffffff" stroke-width="1"/><rect x="299.5" y="562.5" width="4" height="3" fill="none" stroke="#ffffff" stroke-width="1"/><rect x="341.5" y="562.5" width="4" height="3" fill="none" stroke="#ffffff" stroke-width="1"/><rect x="384.5" y="563.5" width="4" height="3" fill="none" stroke="#ffffff" stroke-width="1"/><rect x="427.5" y="563.5" width="4" height="3" fill="none" stroke="#ffffff" stroke-width="1"/><rect x="469.5" y="553.5" width="4" height="3" fill="none" stroke="#ffffff" stroke-width="1"/><rect x="512.5" y="532.5" width="4" height="3" fill="none" stroke="#ffffff" stroke-width="1"/><rect x="555.5" y="520.5" width="4" height="3" fill="none" stroke="#ffffff" stroke-width="1"/><rect x="597.5" y="527.5" width="4" height="3" fill="none" stroke="#ffffff" stroke-width="1"/><rect x="640.5" y="530.5" width="4" height="3" fill="none" stroke="#ffffff" stroke-width="1"/><rect x="682.5" y="531.5" width="4" height="3" fill="none" stroke="#ffffff" stroke-width="1"/><rect x="725.5" y="532.5" width="4" height="3" fill="none" stroke="#ffffff" stroke-width="1"/><rect x="768.5" y="539.5" width="4" height="3" fill="none" stroke="#ffffff" stroke-width="1"/><rect x="810.5" y="549.5" width="4" height="3" fill="none" stroke="#ffffff" stroke-width="1"/><rect x="853.5" y="552.5" width="4" height="3" fill="none" stroke="#ffffff" stroke-width="1"/><rect x="895.5" y="547.5" width="4" height="3" fill="none" stroke="#ffffff" stroke-width="1"/><rect x="938.5" y="533.5" width="4" height="3" fill="none" stroke="#ffffff" stroke-width="1"/><rect x="981.5" y="507.5" width="4" height="3" fill="none" stroke="#ffffff" stroke-width="1"/><rect x="1023.5" y="477.5" width="4" height="3" fill="none" stroke="#ffffff" stroke-width="1"/><polyline points="0.0,578.1 2.6,579.4 26.0,589.0 45.2,597.0 64.6,596.7 80.7,596.1 100.0,592.0 113.8,589.9 120.4,589.0 140.0,586.1 163.9,583.4 181.2,578.4 198.5,575.8 215.0,574.8 230.8,572.4 241.2,571.0 256.2,568.1 273.5,564.8 290.0,564.5 308.0,563.4 325.4,563.1 342.7,563.1 356.6,562.6 365.0,563.1 383.0,564.3 403.9,565.3 417.7,564.3 435.0,565.0 448.0,562.1 456.0,561.7 467.7,556.0 477.0,552.4 485.0,547.9 498.5,538.9 511.2,533.4 517.0,533.2 529.8,528.6 541.0,523.5 550.2,521.2 563.0,520.9 581.5,521.8 590.8,524.0 600.0,528.6 610.4,528.4 618.0,531.2 633.5,531.7 648.8,532.2 664.2,532.6 671.9,531.7 679.6,532.2 695.0,533.0 720.8,532.2 736.2,534.6 751.5,536.4 766.9,539.8 782.3,543.6 790.0,546.0 800.4,548.3 815.8,551.3 828.0,552.7 846.5,553.2 858.8,554.1 869.6,553.2 878.0,552.1 890.3,549.8 902.6,546.7 914.9,542.5 920.0,540.9 933.9,537.0 947.7,530.2 961.6,521.6 978.2,510.8 989.3,504.8 1003.1,494.9 1008.6,490.6 1026.8,476.9 1034.6,472.0 1045.4,465.2" fill="none" stroke="#ff1010" stroke-width="1" shape-rendering="crispEdges"/><polyline points="0.0,579.1 2.6,580.4 26.0,590.0 45.2,598.0 64.6,597.7 80.7,597.1 100.0,593.0 113.8,590.9 120.4,590.0 140.0,587.1 163.9,584.4 181.2,579.4 198.5,576.8 215.0,575.8 230.8,573.4 241.2,572.0 256.2,569.1 273.5,565.8 290.0,565.5 308.0,564.4 325.4,564.1 342.7,564.1 356.6,563.6 365.0,564.1 383.0,565.3 403.9,566.3 417.7,565.3 435.0,566.0 448.0,563.1 456.0,562.7 467.7,557.0 477.0,553.4 485.0,548.9 498.5,539.9 511.2,534.4 517.0,534.2 529.8,529.6 541.0,524.5 550.2,522.2 563.0,521.9 581.5,522.8 590.8,525.0 600.0,529.6 610.4,529.4 618.0,532.2 633.5,532.7 648.8,533.2 664.2,533.6 671.9,532.7 679.6,533.2 695.0,534.0 720.8,533.2 736.2,535.6 751.5,537.4 766.9,540.8 782.3,544.6 790.0,547.0 800.4,549.3 815.8,552.3 828.0,553.7 846.5,554.2 858.8,555.1 869.6,554.2 878.0,553.1 890.3,550.8 902.6,547.7 914.9,543.5 920.0,541.9 933.9,538.0 947.7,531.2 961.6,522.6 978.2,511.8 989.3,505.8 1003.1,495.9 1008.6,491.6 1026.8,477.9 1034.6,473.0 1045.4,466.2" fill="none" stroke="#10e010" stroke-width="1" shape-rendering="crispEdges"/><rect x="17.8" y="597.9" width="2.2" height="7" fill="#10e010"/><polygon points="14.0,604.1 23.6,604.1 18.8,609.9" fill="#10e010"/><polygon points="39.8,603.4 35.0,609.4 44.6,609.4" fill="#ff1010"/><rect x="38.8" y="608.9" width="2.2" height="6.5" fill="#ff1010"/><text x="42.5" y="611.8" font-family="Liberation Sans" font-size="16" fill="#ff1010" stroke="#ff1010" stroke-width="0.4" textLength="8" lengthAdjust="spacingAndGlyphs">B</text><circle cx="50.8" cy="603.0" r="4.3" fill="none" stroke="#f040f0" stroke-width="1"/><circle cx="50.8" cy="603.0" r="2.2" fill="none" stroke="#f040f0" stroke-width="1"/><text x="56.0" y="607.5" font-family="Liberation Sans" font-size="12" fill="#f040f0">K</text><rect x="81.9" y="589.4" width="2.2" height="7" fill="#10e010"/><polygon points="78.1,595.6 87.7,595.6 82.9,601.4" fill="#10e010"/><rect x="97.4" y="567.2" width="2.2" height="7" fill="#10e010"/><polygon points="93.6,573.4 103.2,573.4 98.4,579.2" fill="#10e010"/><rect x="102.7" y="569.9" width="2.2" height="7" fill="#10e010"/><polygon points="98.9,576.1 108.5,576.1 103.7,581.9" fill="#10e010"/><rect x="113.4" y="578.4" width="2.2" height="7" fill="#10e010"/><polygon points="109.6,584.6 119.2,584.6 114.4,590.4" fill="#10e010"/><rect x="182.5" y="559.3" width="2.2" height="7" fill="#10e010"/><polygon points="178.7,565.5 188.3,565.5 183.5,571.3" fill="#10e010"/><rect x="187.7" y="557.8" width="2.2" height="7" fill="#10e010"/><polygon points="183.9,564.0 193.5,564.0 188.7,569.8" fill="#10e010"/><rect x="199.2" y="564.3" width="2.2" height="7" fill="#10e010"/><polygon points="195.4,570.5 205.0,570.5 200.2,576.3" fill="#10e010"/><polygon points="168.0,583.0 163.2,589.0 172.8,589.0" fill="#ff1010"/><rect x="167.0" y="588.5" width="2.2" height="6.5" fill="#ff1010"/><text x="164.0" y="595.7" font-family="Liberation Sans" font-size="16" fill="#ff1010" stroke="#ff1010" stroke-width="0.4" textLength="8" lengthAdjust="spacingAndGlyphs">B</text><polygon points="236.6,556.9 237.9,560.1 241.4,560.3 238.7,562.5 239.5,565.9 236.6,564.1 233.7,565.9 234.5,562.5 231.8,560.3 235.3,560.1" fill="#10e010"/><text x="241.8" y="567.8" font-family="Liberation Sans" font-size="12" fill="#10e010">M</text><polygon points="237.0,569.9 232.2,575.9 241.8,575.9" fill="#ff1010"/><rect x="236.0" y="575.4" width="2.2" height="6.5" fill="#ff1010"/><rect x="268.0" y="556.9" width="2.2" height="7" fill="#10e010"/><polygon points="264.2,563.1 273.8,563.1 269.0,568.9" fill="#10e010"/><rect x="289.8" y="559.4" width="2.2" height="7" fill="#10e010"/><polygon points="286.0,565.6 295.6,565.6 290.8,571.4" fill="#10e010"/><text x="292.0" y="575.8" font-family="Liberation Sans" font-size="16" fill="#ff1010" stroke="#ff1010" stroke-width="0.4" textLength="8" lengthAdjust="spacingAndGlyphs">B</text><polygon points="332.9,572.9 328.1,578.9 337.7,578.9" fill="#ff1010"/><rect x="331.9" y="578.4" width="2.2" height="6.5" fill="#ff1010"/><rect x="337.7" y="561.5" width="2.2" height="7" fill="#10e010"/><polygon points="333.9,567.7 343.5,567.7 338.7,573.5" fill="#10e010"/><text x="345.0" y="583.0" font-family="Liberation Sans" font-size="16" fill="#ff1010" stroke="#ff1010" stroke-width="0.4" textLength="8" lengthAdjust="spacingAndGlyphs">B</text><rect x="362.5" y="564.1" width="2.2" height="7" fill="#10e010"/><polygon points="358.7,570.3 368.3,570.3 363.5,576.1" fill="#10e010"/><text x="393.0" y="581.6" font-family="Liberation Sans" font-size="16" fill="#ff1010" stroke="#ff1010" stroke-width="0.4" textLength="8" lengthAdjust="spacingAndGlyphs">B</text><polygon points="408.0,567.6 403.2,573.6 412.8,573.6" fill="#ff1010"/><rect x="407.0" y="573.1" width="2.2" height="6.5" fill="#ff1010"/><rect x="422.5" y="561.6" width="2.2" height="7" fill="#10e010"/><polygon points="418.7,567.8 428.3,567.8 423.5,573.6" fill="#10e010"/><polygon points="439.6,569.5 434.8,575.5 444.4,575.5" fill="#ff1010"/><rect x="438.6" y="575.0" width="2.2" height="6.5" fill="#ff1010"/><text x="441.0" y="578.6" font-family="Liberation Sans" font-size="16" fill="#ff1010" stroke="#ff1010" stroke-width="0.4" textLength="8" lengthAdjust="spacingAndGlyphs">B</text><rect x="455.0" y="535.8" width="2.2" height="7" fill="#10e010"/><polygon points="451.2,542.0 460.8,542.0 456.0,547.8" fill="#10e010"/><rect x="470.8" y="506.6" width="2.2" height="7" fill="#10e010"/><polygon points="467.0,512.8 476.6,512.8 471.8,518.6" fill="#10e010"/><rect x="496.9" y="500.1" width="2.2" height="7" fill="#10e010"/><polygon points="493.1,506.3 502.7,506.3 497.9,512.1" fill="#10e010"/><rect x="502.8" y="511.2" width="2.2" height="7" fill="#10e010"/><polygon points="499.0,517.4 508.6,517.4 503.8,523.2" fill="#10e010"/><polygon points="566.8,539.4 562.0,545.4 571.6,545.4" fill="#ff1010"/><rect x="565.8" y="544.9" width="2.2" height="6.5" fill="#ff1010"/><rect x="592.5" y="537.7" width="2.2" height="7" fill="#10e010"/><polygon points="588.7,543.9 598.3,543.9 593.5,549.7" fill="#10e010"/><polygon points="605.0,547.0 600.2,553.0 609.8,553.0" fill="#ff1010"/><rect x="604.0" y="552.5" width="2.2" height="6.5" fill="#ff1010"/><text x="617.3" y="551.3" font-family="Liberation Sans" font-size="16" fill="#ff1010" stroke="#ff1010" stroke-width="0.4" textLength="8" lengthAdjust="spacingAndGlyphs">B</text><rect x="641.0" y="531.5" width="2.2" height="7" fill="#10e010"/><polygon points="637.2,537.7 646.8,537.7 642.0,543.5" fill="#10e010"/><polygon points="647.0,538.3 642.2,544.3 651.8,544.3" fill="#ff1010"/><rect x="646.0" y="543.8" width="2.2" height="6.5" fill="#ff1010"/><rect x="657.0" y="531.0" width="2.2" height="7" fill="#10e010"/><polygon points="653.2,537.2 662.8,537.2 658.0,543.0" fill="#10e010"/><polygon points="668.8,540.2 664.0,546.2 673.6,546.2" fill="#ff1010"/><rect x="667.8" y="545.7" width="2.2" height="6.5" fill="#ff1010"/><text x="665.0" y="551.7" font-family="Liberation Sans" font-size="16" fill="#ff1010" stroke="#ff1010" stroke-width="0.4" textLength="8" lengthAdjust="spacingAndGlyphs">B</text><rect x="684.0" y="526.2" width="2.2" height="7" fill="#10e010"/><polygon points="680.2,532.4 689.8,532.4 685.0,538.2" fill="#10e010"/><polygon points="705.4,542.6 700.6,548.6 710.2,548.6" fill="#ff1010"/><rect x="704.4" y="548.1" width="2.2" height="6.5" fill="#ff1010"/><polygon points="738.0,548.8 733.2,554.8 742.8,554.8" fill="#ff1010"/><rect x="737.0" y="554.3" width="2.2" height="6.5" fill="#ff1010"/><rect x="742.0" y="542.4" width="2.2" height="7" fill="#10e010"/><polygon points="738.2,548.6 747.8,548.6 743.0,554.4" fill="#10e010"/><rect x="768.7" y="552.9" width="2.2" height="7" fill="#10e010"/><polygon points="764.9,559.1 774.5,559.1 769.7,564.9" fill="#10e010"/><polygon points="773.8,566.2 769.0,572.2 778.6,572.2" fill="#ff1010"/><rect x="772.8" y="571.7" width="2.2" height="6.5" fill="#ff1010"/><circle cx="779.4" cy="569.0" r="4.3" fill="none" stroke="#f040f0" stroke-width="1"/><circle cx="779.4" cy="569.0" r="2.2" fill="none" stroke="#f040f0" stroke-width="1"/><text x="784.6" y="573.5" font-family="Liberation Sans" font-size="12" fill="#f040f0">K</text><rect x="854.0" y="548.1" width="2.2" height="7" fill="#10e010"/><polygon points="850.2,554.3 859.8,554.3 855.0,560.1" fill="#10e010"/><text x="866.5" y="565.6" font-family="Liberation Sans" font-size="16" fill="#ff1010" stroke="#ff1010" stroke-width="0.4" textLength="8" lengthAdjust="spacingAndGlyphs">B</text><rect x="896.0" y="523.3" width="2.2" height="7" fill="#10e010"/><polygon points="892.2,529.5 901.8,529.5 897.0,535.3" fill="#10e010"/><rect x="917.6" y="524.5" width="2.2" height="7" fill="#10e010"/><polygon points="913.8,530.7 923.4,530.7 918.6,536.5" fill="#10e010"/><rect x="923.0" y="526.8" width="2.2" height="7" fill="#10e010"/><polygon points="919.2,533.0 928.8,533.0 924.0,538.8" fill="#10e010"/><text x="925.4" y="545.7" font-family="Liberation Sans" font-size="16" fill="#ff1010" stroke="#ff1010" stroke-width="0.4" textLength="8" lengthAdjust="spacingAndGlyphs">B</text><rect x="954.9" y="476.2" width="2.2" height="7" fill="#10e010"/><polygon points="951.1,482.4 960.7,482.4 955.9,488.2" fill="#10e010"/><rect x="1013.4" y="442.8" width="2.2" height="7" fill="#10e010"/><polygon points="1009.6,449.0 1019.2,449.0 1014.4,454.8" fill="#10e010"/><rect x="1018.6" y="446.2" width="2.2" height="7" fill="#10e010"/><polygon points="1014.8,452.4 1024.4,452.4 1019.6,458.2" fill="#10e010"/><rect x="981.7" y="452.5" width="2.2" height="7" fill="#10e010"/><polygon points="977.9,458.7 987.5,458.7 982.7,464.5" fill="#10e010"/><polygon points="1048,414 1054,414 1053,416 1054,418 1051,417 1048,418 1049,416" fill="#10e010"/><text x="1056" y="418.5" font-family="Liberation Sans" font-size="6" fill="#10e010">IVI</text></g></svg>
<div class="t" style="left:28px;top:2px;color:#d8d8d8;font-size:12px;">分时</div><div class="t" style="left:61px;top:2px;color:#d8d8d8;font-size:12px;">1分钟</div><div class="t" style="left:101px;top:2px;color:#d8d8d8;font-size:12px;">5分钟</div><div class="t" style="left:139px;top:2px;color:#d8d8d8;font-size:12px;">15分钟</div><div class="t" style="left:185px;top:2px;color:#d8d8d8;font-size:12px;">30分钟</div><div class="t" style="left:231px;top:2px;color:#d8d8d8;font-size:12px;">60分钟</div><div class="t" style="left:278px;top:2px;color:#40e8f0;font-size:12px;">日线</div><div class="t" style="left:312px;top:2px;color:#d8d8d8;font-size:12px;">周线</div><div class="t" style="left:346px;top:2px;color:#d8d8d8;font-size:12px;">月线</div><div class="t" style="left:379px;top:2px;color:#d8d8d8;font-size:12px;">多周期</div><div class="t" style="left:422px;top:2px;color:#d8d8d8;font-size:12px;">更多 &gt;</div><div class="t" style="left:806px;top:2px;width:34px;text-align:center;color:#d8d8d8">复权</div><div class="t" style="left:841px;top:2px;width:34px;text-align:center;color:#d8d8d8">叠加</div><div class="t" style="left:875px;top:2px;width:34px;text-align:center;color:#d8d8d8">多股</div><div class="t" style="left:910px;top:2px;width:34px;text-align:center;color:#d8d8d8">统计</div><div class="t" style="left:945px;top:2px;width:34px;text-align:center;color:#d8d8d8">画线</div><div class="t" style="left:980px;top:2px;width:34px;text-align:center;color:#d8d8d8">F10</div><div class="t" style="left:1015px;top:2px;width:34px;text-align:center;color:#d8d8d8">标记</div><div class="t" style="left:1050px;top:2px;width:34px;text-align:center;color:#d8d8d8">+自选</div><div class="t" style="left:1085px;top:2px;width:34px;text-align:center;color:#d8d8d8">返回</div><div class="t" style="left:3px;top:22px;color:#d0d0d0;font-size:12px;">江钨装备(日线.前复权)</div><div class="t" style="left:144px;top:22px;color:#ff2020;font-size:12px;">MA5: 10.12</div><div class="t" style="left:209px;top:22px;color:#a8a8a8;font-size:12px;">MA10: 10.85</div><div class="t" style="left:281px;top:22px;color:#a8a8a8;font-size:12px;">MA20: 9.40</div><div class="t" style="left:346.5px;top:22px;color:#a8a8a8;font-size:12px;">MA60: 11.57</div><div class="t" style="left:1085px;top:34.8px;color:#ff3838;font-size:12.5px;width:31px;text-align:right;letter-spacing:-0.4px">12.00</div><div class="t" style="left:1085px;top:75.9px;color:#ff3838;font-size:12.5px;width:31px;text-align:right;letter-spacing:-0.4px">11.00</div><div class="t" style="left:1085px;top:117.0px;color:#ff3838;font-size:12.5px;width:31px;text-align:right;letter-spacing:-0.4px">10.00</div><div class="t" style="left:1085px;top:158.10000000000002px;color:#ff3838;font-size:12.5px;width:31px;text-align:right;letter-spacing:-0.4px">9.00</div><div class="t" style="left:1085px;top:199.2px;color:#ff3838;font-size:12.5px;width:31px;text-align:right;letter-spacing:-0.4px">8.00</div><div class="t" style="left:1085px;top:240.3px;color:#ff3838;font-size:12.5px;width:31px;text-align:right;letter-spacing:-0.4px">7.00</div><div class="t" style="left:1085px;top:281.40000000000003px;color:#ff3838;font-size:12.5px;width:31px;text-align:right;letter-spacing:-0.4px">6.00</div><div class="t" style="left:1085px;top:322.5px;color:#ff3838;font-size:12.5px;width:31px;text-align:right;letter-spacing:-0.4px">5.00</div><div class="t" style="left:1085px;top:363.6px;color:#ff3838;font-size:12.5px;width:31px;text-align:right;letter-spacing:-0.4px">4.00</div><div class="t" style="left:1085px;top:411.0px;color:#ff3838;font-size:12.5px;width:31px;text-align:right;letter-spacing:-0.4px">12.00</div><div class="t" style="left:1085px;top:449.25px;color:#ff3838;font-size:12.5px;width:31px;text-align:right;letter-spacing:-0.4px">10.50</div><div class="t" style="left:1085px;top:487.5px;color:#ff3838;font-size:12.5px;width:31px;text-align:right;letter-spacing:-0.4px">9.00</div><div class="t" style="left:1085px;top:525.75px;color:#ff3838;font-size:12.5px;width:31px;text-align:right;letter-spacing:-0.4px">7.50</div><div class="t" style="left:1085px;top:564.0px;color:#ff3838;font-size:12.5px;width:31px;text-align:right;letter-spacing:-0.4px">6.00</div><div class="t" style="left:1085px;top:602.25px;color:#ff3838;font-size:12.5px;width:31px;text-align:right;letter-spacing:-0.4px">4.50</div><div class="t" style="left:17px;top:399px;color:#d0d0d0;font-size:12px;">股朋指标网</div><div class="t" style="left:84px;top:399px;color:#ff2020;font-size:12px;">趋势: 10.12</div><div class="t" style="left:149.5px;top:399px;color:#a8a8a8;font-size:12px;">上轨: 10.85</div><div class="t" style="left:215.4px;top:399px;color:#a8a8a8;font-size:12px;">下轨: 9.40</div><div class="t" style="left:273px;top:399px;color:#a8a8a8;font-size:12px;">上极: 11.57</div><div class="t" style="left:339.6px;top:399px;color:#a8a8a8;font-size:12px;">下极: 8.67</div><div class="t" style="left:399px;top:399px;color:#20e020;font-size:12px;">MA5: 10.69</div><div class="t" style="left:464px;top:399px;color:#f0f000;font-size:12px;">MA13: 10.51</div><div class="t" style="left:536.5px;top:399px;color:#20e020;font-size:12px;">: 10.12</div><div class="t" style="left:579px;top:399px;color:#20e020;font-size:12px;">: 10.85</div><div class="t" style="left:2px;top:632px;color:#ff3838;font-size:12px;">2025年</div><div class="t" style="left:46px;top:632px;color:#ff3838;font-size:12px;">5</div><div class="t" style="left:147px;top:632px;color:#ff3838;font-size:12px;">6</div><div class="t" style="left:253px;top:632px;color:#ff3838;font-size:12px;">7</div><div class="t" style="left:376px;top:632px;color:#ff3838;font-size:12px;">8</div><div class="t" style="left:488px;top:632px;color:#ff3838;font-size:12px;">9</div><div class="t" style="left:605px;top:632px;color:#ff3838;font-size:12px;">10</div><div class="t" style="left:695px;top:632px;color:#ff3838;font-size:12px;">11</div><div class="t" style="left:802px;top:632px;color:#ff3838;font-size:12px;">12</div><div class="t" style="left:924px;top:632px;color:#ff3838;font-size:12px;">1</div><div style="position:absolute;left:1071px;top:508px;width:49px;height:15px;background:#1010a0"></div><div class="t" style="left:1072px;top:508px;color:#ffffff;font-size:12px;">7.84</div><div style="position:absolute;left:1122px;top:19px;width:8px;height:631px;overflow:hidden"><div class="t" style="left:-3px;top:9px;width:14px;height:16px;color:#d0d0d0;font-size:13px;line-height:14px;writing-mode:vertical-rl;text-orientation:sideways;letter-spacing:3px;overflow:hidden">资</div><div class="t" style="left:-3px;top:29px;width:14px;height:93px;color:#d0d0d0;font-size:13px;line-height:14px;writing-mode:vertical-rl;text-orientation:sideways;letter-spacing:3px;overflow:hidden">资资资资资资</div><div class="t" style="left:-3px;top:126px;width:14px;height:92px;color:#d0d0d0;font-size:13px;line-height:14px;writing-mode:vertical-rl;text-orientation:sideways;letter-spacing:3px;overflow:hidden">资资资资资资</div><div class="t" style="left:-3px;top:222px;width:14px;height:100px;color:#d0d0d0;font-size:13px;line-height:14px;writing-mode:vertical-rl;text-orientation:sideways;letter-spacing:3px;overflow:hidden">开发资资金分</div><div class="t" style="left:-3px;top:326px;width:14px;height:51px;color:#d0d0d0;font-size:13px;line-height:14px;writing-mode:vertical-rl;text-orientation:sideways;letter-spacing:3px;overflow:hidden">指标收</div><div class="t" style="left:1px;top:381px;color:#e8e800;font-size:13px">自</div><div class="t" style="left:1px;top:402px;color:#c8c8c8;font-size:12px">入</div><div class="t" style="left:0px;top:422.0px;color:#e0e0e0;font-size:13px">1</div><div class="t" style="left:0px;top:439.9px;color:#e0e0e0;font-size:13px">1</div><div class="t" style="left:0px;top:457.8px;color:#e0e0e0;font-size:13px">1</div><div class="t" style="left:0px;top:475.7px;color:#e0e0e0;font-size:13px">1</div><div class="t" style="left:0px;top:493.6px;color:#e0e0e0;font-size:13px">1</div><div class="t" style="left:0px;top:511.5px;color:#e0e0e0;font-size:13px">1</div><div class="t" style="left:0px;top:529.4px;color:#e0e0e0;font-size:13px">1</div><div class="t" style="left:0px;top:547.3px;color:#e0e0e0;font-size:13px">1</div><div class="t" style="left:0px;top:565.2px;color:#e0e0e0;font-size:13px">1</div></div><div style="position:absolute;left:971px;top:600px;width:159px;height:50px;background:#3b3634"></div><div class="t" style="left:971px;top:603px;color:#ffffff;font-size:18.5px;width:159px;text-align:center;font-weight:bold;line-height:22px">指标公式网</div><div class="t" style="left:971px;top:625px;color:#ffffff;font-size:16.5px;width:159px;text-align:center;line-height:18px">www.zbgs3.com</div>
</body></html>
